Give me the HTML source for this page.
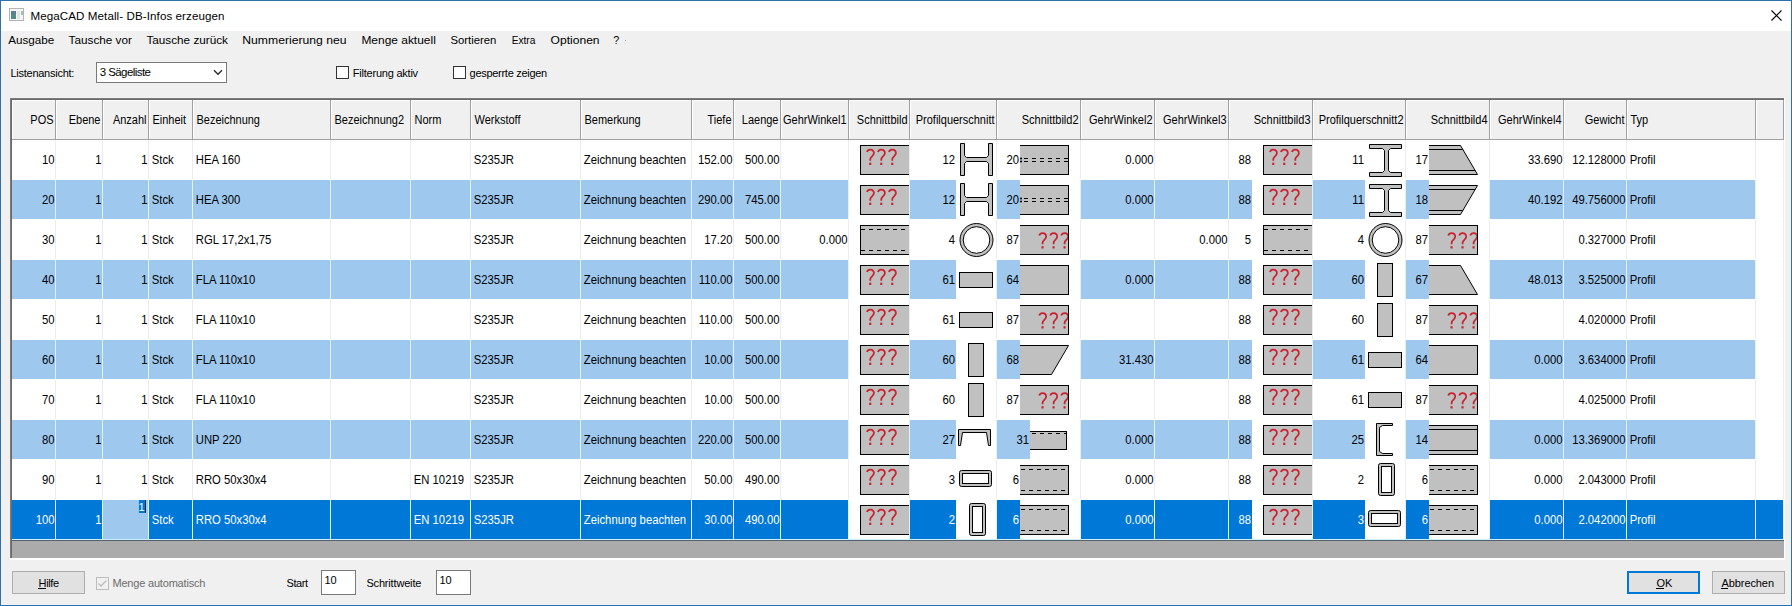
<!DOCTYPE html>
<html><head><meta charset="utf-8"><title>MegaCAD Metall- DB-Infos erzeugen</title>
<style>
html,body{margin:0;padding:0;background:#f0f0f0;overflow:hidden;}
svg{display:block;font-family:"Liberation Sans", sans-serif;}
</style></head><body>
<svg width="1792" height="606" viewBox="0 0 1792 606">
<rect x="0" y="0" width="1792" height="606" fill="#f0f0f0" />
<rect x="1" y="1" width="1790" height="30" fill="#ffffff" />
<rect x="0" y="0" width="1792" height="1" fill="#2f6faa" />
<rect x="0" y="605" width="1792" height="1" fill="#2f6faa" />
<rect x="0" y="0" width="1" height="606" fill="#2f6faa" />
<rect x="1791" y="0" width="1" height="606" fill="#2f6faa" />
<g shape-rendering="crispEdges">
<rect x="9" y="8" width="15" height="13" fill="#b4b4b4" />
<rect x="10" y="9" width="13" height="11" fill="#f6f6f6" />
<rect x="11" y="11" width="5" height="8" fill="#4f8d8a" />
<rect x="11" y="11" width="5" height="3" fill="#5a7f98" />
<rect x="17" y="11" width="3" height="8" fill="#e4e4e4" />
<rect x="21" y="11" width="2" height="4" fill="#a9bab2" />
</g>
<text x="30.5" y="20.3" font-size="11.6" fill="#000" text-anchor="start" textLength="194">MegaCAD Metall- DB-Infos erzeugen</text>
<path d="M1771.5,10.5 L1781.5,20.5 M1781.5,10.5 L1771.5,20.5" stroke="#000" stroke-width="1.1" fill="none"/>
<text x="8.3" y="43.8" font-size="11.6" fill="#000" text-anchor="start" textLength="46" lengthAdjust="spacingAndGlyphs">Ausgabe</text>
<text x="68.6" y="43.8" font-size="11.6" fill="#000" text-anchor="start" textLength="63.3" lengthAdjust="spacingAndGlyphs">Tausche vor</text>
<text x="146.4" y="43.8" font-size="11.6" fill="#000" text-anchor="start" textLength="81.6" lengthAdjust="spacingAndGlyphs">Tausche zurück</text>
<text x="242.3" y="43.8" font-size="11.6" fill="#000" text-anchor="start" textLength="104.3" lengthAdjust="spacingAndGlyphs">Nummerierung neu</text>
<text x="361.4" y="43.8" font-size="11.6" fill="#000" text-anchor="start" textLength="74.4" lengthAdjust="spacingAndGlyphs">Menge aktuell</text>
<text x="450.4" y="43.8" font-size="11.6" fill="#000" text-anchor="start" textLength="46" lengthAdjust="spacingAndGlyphs">Sortieren</text>
<text x="511.7" y="43.8" font-size="11.6" fill="#000" text-anchor="start" textLength="23.7" lengthAdjust="spacingAndGlyphs">Extra</text>
<text x="550.6" y="43.8" font-size="11.6" fill="#000" text-anchor="start" textLength="49" lengthAdjust="spacingAndGlyphs">Optionen</text>
<text x="613.2" y="43.8" font-size="11.6" fill="#000" text-anchor="start" textLength="6" lengthAdjust="spacingAndGlyphs">?</text>
<rect x="625" y="40" width="1" height="1" fill="#a0a0a0" />
<text x="10.4" y="77" font-size="11" fill="#000" text-anchor="start" textLength="64">Listenansicht:</text>
<g shape-rendering="crispEdges">
<rect x="96" y="62" width="131" height="21" fill="#7a7a7a" />
<rect x="97" y="63" width="129" height="19" fill="#ffffff" />
</g>
<text x="99.7" y="76" font-size="11.5" fill="#000" text-anchor="start" textLength="51.3">3 Sägeliste</text>
<path d="M214,70.3 L218,74.3 L222,70.3" stroke="#2b2b2b" stroke-width="1.4" fill="none"/>
<g shape-rendering="crispEdges">
<rect x="336" y="66" width="13" height="13" fill="#333333" />
<rect x="337" y="67" width="11" height="11" fill="#ffffff" />
</g>
<text x="352.8" y="77" font-size="11" fill="#000" text-anchor="start" textLength="65.3">Filterung aktiv</text>
<g shape-rendering="crispEdges">
<rect x="453" y="66" width="13" height="13" fill="#333333" />
<rect x="454" y="67" width="11" height="11" fill="#ffffff" />
</g>
<text x="469.6" y="77" font-size="11" fill="#000" text-anchor="start" textLength="77.6">gesperrte zeigen</text>
<g shape-rendering="crispEdges">
<rect x="10" y="98" width="1775" height="462" fill="#ffffff" />
<rect x="10" y="98" width="1774" height="1" fill="#7c7c7c" />
<rect x="10" y="98" width="1" height="461" fill="#7c7c7c" />
<rect x="11" y="99" width="1773" height="1" fill="#696969" />
<rect x="11" y="99" width="1" height="460" fill="#696969" />
<rect x="12" y="100" width="1772" height="39" fill="#f0f0f0" />
<rect x="12" y="139" width="1772" height="1" fill="#a0a0a0" />
<rect x="12" y="100" width="1772" height="1" fill="#ffffff" />
<rect x="12" y="100" width="1" height="39" fill="#ffffff" />
<rect x="55" y="100" width="1" height="40" fill="#a0a0a0" />
<rect x="56" y="101" width="1" height="38" fill="#ffffff" />
<rect x="102" y="100" width="1" height="40" fill="#a0a0a0" />
<rect x="103" y="101" width="1" height="38" fill="#ffffff" />
<rect x="148" y="100" width="1" height="40" fill="#a0a0a0" />
<rect x="149" y="101" width="1" height="38" fill="#ffffff" />
<rect x="192" y="100" width="1" height="40" fill="#a0a0a0" />
<rect x="193" y="101" width="1" height="38" fill="#ffffff" />
<rect x="330" y="100" width="1" height="40" fill="#a0a0a0" />
<rect x="331" y="101" width="1" height="38" fill="#ffffff" />
<rect x="410" y="100" width="1" height="40" fill="#a0a0a0" />
<rect x="411" y="101" width="1" height="38" fill="#ffffff" />
<rect x="470" y="100" width="1" height="40" fill="#a0a0a0" />
<rect x="471" y="101" width="1" height="38" fill="#ffffff" />
<rect x="580" y="100" width="1" height="40" fill="#a0a0a0" />
<rect x="581" y="101" width="1" height="38" fill="#ffffff" />
<rect x="691" y="100" width="1" height="40" fill="#a0a0a0" />
<rect x="692" y="101" width="1" height="38" fill="#ffffff" />
<rect x="733" y="100" width="1" height="40" fill="#a0a0a0" />
<rect x="734" y="101" width="1" height="38" fill="#ffffff" />
<rect x="780" y="100" width="1" height="40" fill="#a0a0a0" />
<rect x="781" y="101" width="1" height="38" fill="#ffffff" />
<rect x="848" y="100" width="1" height="40" fill="#a0a0a0" />
<rect x="849" y="101" width="1" height="38" fill="#ffffff" />
<rect x="909" y="100" width="1" height="40" fill="#a0a0a0" />
<rect x="910" y="101" width="1" height="38" fill="#ffffff" />
<rect x="996" y="100" width="1" height="40" fill="#a0a0a0" />
<rect x="997" y="101" width="1" height="38" fill="#ffffff" />
<rect x="1080" y="100" width="1" height="40" fill="#a0a0a0" />
<rect x="1081" y="101" width="1" height="38" fill="#ffffff" />
<rect x="1154" y="100" width="1" height="40" fill="#a0a0a0" />
<rect x="1155" y="101" width="1" height="38" fill="#ffffff" />
<rect x="1228" y="100" width="1" height="40" fill="#a0a0a0" />
<rect x="1229" y="101" width="1" height="38" fill="#ffffff" />
<rect x="1312" y="100" width="1" height="40" fill="#a0a0a0" />
<rect x="1313" y="101" width="1" height="38" fill="#ffffff" />
<rect x="1405" y="100" width="1" height="40" fill="#a0a0a0" />
<rect x="1406" y="101" width="1" height="38" fill="#ffffff" />
<rect x="1489" y="100" width="1" height="40" fill="#a0a0a0" />
<rect x="1490" y="101" width="1" height="38" fill="#ffffff" />
<rect x="1563" y="100" width="1" height="40" fill="#a0a0a0" />
<rect x="1564" y="101" width="1" height="38" fill="#ffffff" />
<rect x="1626" y="100" width="1" height="40" fill="#a0a0a0" />
<rect x="1627" y="101" width="1" height="38" fill="#ffffff" />
<rect x="1755" y="100" width="1" height="40" fill="#a0a0a0" />
<rect x="1756" y="101" width="1" height="38" fill="#ffffff" />
<rect x="1783" y="100" width="1" height="40" fill="#a0a0a0" />
</g>
<text x="53.5" y="124" font-size="11" fill="#000" text-anchor="end" transform="matrix(1 0 0 1.12 0 -14.880)" >POS</text>
<text x="100.5" y="124" font-size="11" fill="#000" text-anchor="end" transform="matrix(1 0 0 1.12 0 -14.880)" >Ebene</text>
<text x="146.5" y="124" font-size="11" fill="#000" text-anchor="end" transform="matrix(1 0 0 1.12 0 -14.880)" >Anzahl</text>
<text x="152.5" y="124" font-size="11" fill="#000" text-anchor="start" transform="matrix(1 0 0 1.12 0 -14.880)" >Einheit</text>
<text x="196.5" y="124" font-size="11" fill="#000" text-anchor="start" transform="matrix(1 0 0 1.12 0 -14.880)" >Bezeichnung</text>
<text x="334.5" y="124" font-size="11" fill="#000" text-anchor="start" transform="matrix(1 0 0 1.12 0 -14.880)" >Bezeichnung2</text>
<text x="414.5" y="124" font-size="11" fill="#000" text-anchor="start" transform="matrix(1 0 0 1.12 0 -14.880)" >Norm</text>
<text x="474.5" y="124" font-size="11" fill="#000" text-anchor="start" transform="matrix(1 0 0 1.12 0 -14.880)" >Werkstoff</text>
<text x="584.5" y="124" font-size="11" fill="#000" text-anchor="start" transform="matrix(1 0 0 1.12 0 -14.880)" >Bemerkung</text>
<text x="731.5" y="124" font-size="11" fill="#000" text-anchor="end" transform="matrix(1 0 0 1.12 0 -14.880)" >Tiefe</text>
<text x="778.5" y="124" font-size="11" fill="#000" text-anchor="end" transform="matrix(1 0 0 1.12 0 -14.880)" >Laenge</text>
<text x="846.5" y="124" font-size="11" fill="#000" text-anchor="end" transform="matrix(1 0 0 1.12 0 -14.880)" >GehrWinkel1</text>
<text x="907.5" y="124" font-size="11" fill="#000" text-anchor="end" transform="matrix(1 0 0 1.12 0 -14.880)" >Schnittbild</text>
<text x="994.5" y="124" font-size="11" fill="#000" text-anchor="end" transform="matrix(1 0 0 1.12 0 -14.880)" >Profilquerschnitt</text>
<text x="1078.5" y="124" font-size="11" fill="#000" text-anchor="end" transform="matrix(1 0 0 1.12 0 -14.880)" >Schnittbild2</text>
<text x="1152.5" y="124" font-size="11" fill="#000" text-anchor="end" transform="matrix(1 0 0 1.12 0 -14.880)" >GehrWinkel2</text>
<text x="1226.5" y="124" font-size="11" fill="#000" text-anchor="end" transform="matrix(1 0 0 1.12 0 -14.880)" >GehrWinkel3</text>
<text x="1310.5" y="124" font-size="11" fill="#000" text-anchor="end" transform="matrix(1 0 0 1.12 0 -14.880)" >Schnittbild3</text>
<text x="1403.5" y="124" font-size="11" fill="#000" text-anchor="end" transform="matrix(1 0 0 1.12 0 -14.880)" >Profilquerschnitt2</text>
<text x="1487.5" y="124" font-size="11" fill="#000" text-anchor="end" transform="matrix(1 0 0 1.12 0 -14.880)" >Schnittbild4</text>
<text x="1561.5" y="124" font-size="11" fill="#000" text-anchor="end" transform="matrix(1 0 0 1.12 0 -14.880)" >GehrWinkel4</text>
<text x="1624.5" y="124" font-size="11" fill="#000" text-anchor="end" transform="matrix(1 0 0 1.12 0 -14.880)" >Gewicht</text>
<text x="1630.5" y="124" font-size="11" fill="#000" text-anchor="start" transform="matrix(1 0 0 1.12 0 -14.880)" >Typ</text>
<g shape-rendering="crispEdges">
<rect x="12" y="140" width="1744" height="39" fill="#ffffff" />
</g>
<text x="54.5" y="164" font-size="11.3" fill="#000000" text-anchor="end" transform="matrix(1 0 0 1.1 0 -16.400)" >10</text>
<text x="101.5" y="164" font-size="11.3" fill="#000000" text-anchor="end" transform="matrix(1 0 0 1.1 0 -16.400)" >1</text>
<text x="147.5" y="164" font-size="11.3" fill="#000000" text-anchor="end" transform="matrix(1 0 0 1.1 0 -16.400)" >1</text>
<text x="151.8" y="164" font-size="11.3" fill="#000000" text-anchor="start" transform="matrix(1 0 0 1.1 0 -16.400)" >Stck</text>
<text x="195.8" y="164" font-size="11.3" fill="#000000" text-anchor="start" transform="matrix(1 0 0 1.1 0 -16.400)" >HEA 160</text>
<text x="473.8" y="164" font-size="11.3" fill="#000000" text-anchor="start" transform="matrix(1 0 0 1.1 0 -16.400)" >S235JR</text>
<text x="583.8" y="164" font-size="11.3" fill="#000000" text-anchor="start" transform="matrix(1 0 0 1.1 0 -16.400)" >Zeichnung beachten</text>
<text x="732.5" y="164" font-size="11.3" fill="#000000" text-anchor="end" transform="matrix(1 0 0 1.1 0 -16.400)" >152.00</text>
<text x="779.5" y="164" font-size="11.3" fill="#000000" text-anchor="end" transform="matrix(1 0 0 1.1 0 -16.400)" >500.00</text>
<rect x="849" y="140" width="60" height="39" fill="#fff" shape-rendering="crispEdges"/>
<rect x="956" y="140" width="40" height="39" fill="#fff" shape-rendering="crispEdges"/>
<text x="955" y="164" font-size="11.3" fill="#000000" text-anchor="end" transform="matrix(1 0 0 1.1 0 -16.400)" >12</text>
<rect x="1020" y="140" width="60" height="39" fill="#fff" shape-rendering="crispEdges"/>
<text x="1019" y="164" font-size="11.3" fill="#000000" text-anchor="end" transform="matrix(1 0 0 1.1 0 -16.400)" >20</text>
<text x="1153.5" y="164" font-size="11.3" fill="#000000" text-anchor="end" transform="matrix(1 0 0 1.1 0 -16.400)" >0.000</text>
<rect x="1252" y="140" width="60" height="39" fill="#fff" shape-rendering="crispEdges"/>
<text x="1251" y="164" font-size="11.3" fill="#000000" text-anchor="end" transform="matrix(1 0 0 1.1 0 -16.400)" >88</text>
<rect x="1365" y="140" width="40" height="39" fill="#fff" shape-rendering="crispEdges"/>
<text x="1364" y="164" font-size="11.3" fill="#000000" text-anchor="end" transform="matrix(1 0 0 1.1 0 -16.400)" >11</text>
<rect x="1429" y="140" width="60" height="39" fill="#fff" shape-rendering="crispEdges"/>
<text x="1428" y="164" font-size="11.3" fill="#000000" text-anchor="end" transform="matrix(1 0 0 1.1 0 -16.400)" >17</text>
<text x="1562.5" y="164" font-size="11.3" fill="#000000" text-anchor="end" transform="matrix(1 0 0 1.1 0 -16.400)" >33.690</text>
<text x="1625.5" y="164" font-size="11.3" fill="#000000" text-anchor="end" transform="matrix(1 0 0 1.1 0 -16.400)" >12.128000</text>
<text x="1629.8" y="164" font-size="11.3" fill="#000000" text-anchor="start" transform="matrix(1 0 0 1.1 0 -16.400)" >Profil</text>
<rect x="860" y="145" width="49" height="30" fill="#000" shape-rendering="crispEdges"/>
<rect x="861" y="146" width="48" height="28" fill="#c0c0c0" shape-rendering="crispEdges"/>
<path d="M866.9,152.10000000000002 C867.6,149.9 869.2,149.5 870.2,149.5 C872.6,149.5 873.9,151.20000000000002 873.9,153.20000000000002 C873.9,155.9 870.3,156.60000000000002 870.3,159.10000000000002 V160.70000000000002" stroke="#c8222f" stroke-width="1.75" fill="none"/><rect x="869.2" y="162.70000000000002" width="2.1" height="2.3" fill="#c8222f"/><path d="M877.9,152.10000000000002 C878.6,149.9 880.2,149.5 881.2,149.5 C883.6,149.5 884.9,151.20000000000002 884.9,153.20000000000002 C884.9,155.9 881.3,156.60000000000002 881.3,159.10000000000002 V160.70000000000002" stroke="#c8222f" stroke-width="1.75" fill="none"/><rect x="880.2" y="162.70000000000002" width="2.1" height="2.3" fill="#c8222f"/><path d="M888.9,152.10000000000002 C889.6,149.9 891.2,149.5 892.2,149.5 C894.6,149.5 895.9,151.20000000000002 895.9,153.20000000000002 C895.9,155.9 892.3,156.60000000000002 892.3,159.10000000000002 V160.70000000000002" stroke="#c8222f" stroke-width="1.75" fill="none"/><rect x="891.2" y="162.70000000000002" width="2.1" height="2.3" fill="#c8222f"/>
<path d="M960.5,143.5 H964.5 V155.5 L966.5,157.5 H986.5 L988.5,155.5 V143.5 H992.5 V175.5 H988.5 V163.5 L986.5,161.5 H966.5 L964.5,163.5 V175.5 H960.5 Z" stroke="#000" stroke-width="1"  fill="#c0c0c0"/>
<rect x="1020" y="145" width="49" height="30" fill="#000" shape-rendering="crispEdges"/>
<rect x="1020" y="146" width="48" height="28" fill="#c0c0c0" shape-rendering="crispEdges"/>
<path d="M1024,158.5 H1068" stroke="#000" stroke-width="1"  stroke-width="1.6" stroke-dasharray="4 4" shape-rendering="crispEdges"/>
<rect x="1020" y="157.7" width="2" height="1.6" fill="#000"/>
<path d="M1024,161.5 H1068" stroke="#000" stroke-width="1"  stroke-width="1.6" stroke-dasharray="4 4" shape-rendering="crispEdges"/>
<rect x="1020" y="160.7" width="2" height="1.6" fill="#000"/>
<rect x="1263" y="145" width="49" height="30" fill="#000" shape-rendering="crispEdges"/>
<rect x="1264" y="146" width="48" height="28" fill="#c0c0c0" shape-rendering="crispEdges"/>
<path d="M1269.9,152.10000000000002 C1270.6,149.9 1272.2,149.5 1273.2,149.5 C1275.6,149.5 1276.9,151.20000000000002 1276.9,153.20000000000002 C1276.9,155.9 1273.3,156.60000000000002 1273.3,159.10000000000002 V160.70000000000002" stroke="#c8222f" stroke-width="1.75" fill="none"/><rect x="1272.2" y="162.70000000000002" width="2.1" height="2.3" fill="#c8222f"/><path d="M1280.9,152.10000000000002 C1281.6,149.9 1283.2,149.5 1284.2,149.5 C1286.6,149.5 1287.9,151.20000000000002 1287.9,153.20000000000002 C1287.9,155.9 1284.3,156.60000000000002 1284.3,159.10000000000002 V160.70000000000002" stroke="#c8222f" stroke-width="1.75" fill="none"/><rect x="1283.2" y="162.70000000000002" width="2.1" height="2.3" fill="#c8222f"/><path d="M1291.9,152.10000000000002 C1292.6,149.9 1294.2,149.5 1295.2,149.5 C1297.6,149.5 1298.9,151.20000000000002 1298.9,153.20000000000002 C1298.9,155.9 1295.3,156.60000000000002 1295.3,159.10000000000002 V160.70000000000002" stroke="#c8222f" stroke-width="1.75" fill="none"/><rect x="1294.2" y="162.70000000000002" width="2.1" height="2.3" fill="#c8222f"/>
<path d="M1369.5,144.5 H1401.5 V148.5 H1390.5 L1388.5,150.5 V170.5 L1390.5,172.5 H1401.5 V176.5 H1369.5 V172.5 H1382.5 L1384.5,170.5 V150.5 L1382.5,148.5 H1369.5 Z" stroke="#000" stroke-width="1"  fill="#c0c0c0"/>
<path d="M1429,145.5 H1460.5 L1477.5,174.5 H1429" stroke="#000" stroke-width="1"  fill="#c0c0c0"/>
<path d="M1429,149.5 H1462.8 M1429,170.5 H1475.2" stroke="#000" stroke-width="1"  fill="none"/>
<g shape-rendering="crispEdges">
<rect x="55" y="140" width="1" height="40" fill="#ececec" />
<rect x="102" y="140" width="1" height="40" fill="#ececec" />
<rect x="148" y="140" width="1" height="40" fill="#ececec" />
<rect x="192" y="140" width="1" height="40" fill="#ececec" />
<rect x="330" y="140" width="1" height="40" fill="#ececec" />
<rect x="410" y="140" width="1" height="40" fill="#ececec" />
<rect x="470" y="140" width="1" height="40" fill="#ececec" />
<rect x="580" y="140" width="1" height="40" fill="#ececec" />
<rect x="691" y="140" width="1" height="40" fill="#ececec" />
<rect x="733" y="140" width="1" height="40" fill="#ececec" />
<rect x="780" y="140" width="1" height="40" fill="#ececec" />
<rect x="848" y="140" width="1" height="40" fill="#ececec" />
<rect x="909" y="140" width="1" height="40" fill="#ececec" />
<rect x="996" y="140" width="1" height="40" fill="#ececec" />
<rect x="1080" y="140" width="1" height="40" fill="#ececec" />
<rect x="1154" y="140" width="1" height="40" fill="#ececec" />
<rect x="1228" y="140" width="1" height="40" fill="#ececec" />
<rect x="1312" y="140" width="1" height="40" fill="#ececec" />
<rect x="1405" y="140" width="1" height="40" fill="#ececec" />
<rect x="1489" y="140" width="1" height="40" fill="#ececec" />
<rect x="1563" y="140" width="1" height="40" fill="#ececec" />
<rect x="1626" y="140" width="1" height="40" fill="#ececec" />
<rect x="1755" y="140" width="1" height="40" fill="#ececec" />
<rect x="1783" y="140" width="1" height="40" fill="#ececec" />
<rect x="12" y="179" width="1772" height="1" fill="#ffffff" />
</g>
<g shape-rendering="crispEdges">
<rect x="12" y="180" width="1744" height="39" fill="#9fc8ef" />
</g>
<text x="54.5" y="204" font-size="11.3" fill="#000000" text-anchor="end" transform="matrix(1 0 0 1.1 0 -20.400)" >20</text>
<text x="101.5" y="204" font-size="11.3" fill="#000000" text-anchor="end" transform="matrix(1 0 0 1.1 0 -20.400)" >1</text>
<text x="147.5" y="204" font-size="11.3" fill="#000000" text-anchor="end" transform="matrix(1 0 0 1.1 0 -20.400)" >1</text>
<text x="151.8" y="204" font-size="11.3" fill="#000000" text-anchor="start" transform="matrix(1 0 0 1.1 0 -20.400)" >Stck</text>
<text x="195.8" y="204" font-size="11.3" fill="#000000" text-anchor="start" transform="matrix(1 0 0 1.1 0 -20.400)" >HEA 300</text>
<text x="473.8" y="204" font-size="11.3" fill="#000000" text-anchor="start" transform="matrix(1 0 0 1.1 0 -20.400)" >S235JR</text>
<text x="583.8" y="204" font-size="11.3" fill="#000000" text-anchor="start" transform="matrix(1 0 0 1.1 0 -20.400)" >Zeichnung beachten</text>
<text x="732.5" y="204" font-size="11.3" fill="#000000" text-anchor="end" transform="matrix(1 0 0 1.1 0 -20.400)" >290.00</text>
<text x="779.5" y="204" font-size="11.3" fill="#000000" text-anchor="end" transform="matrix(1 0 0 1.1 0 -20.400)" >745.00</text>
<rect x="849" y="180" width="60" height="39" fill="#fff" shape-rendering="crispEdges"/>
<rect x="956" y="180" width="40" height="39" fill="#fff" shape-rendering="crispEdges"/>
<text x="955" y="204" font-size="11.3" fill="#000000" text-anchor="end" transform="matrix(1 0 0 1.1 0 -20.400)" >12</text>
<rect x="1020" y="180" width="60" height="39" fill="#fff" shape-rendering="crispEdges"/>
<text x="1019" y="204" font-size="11.3" fill="#000000" text-anchor="end" transform="matrix(1 0 0 1.1 0 -20.400)" >20</text>
<text x="1153.5" y="204" font-size="11.3" fill="#000000" text-anchor="end" transform="matrix(1 0 0 1.1 0 -20.400)" >0.000</text>
<rect x="1252" y="180" width="60" height="39" fill="#fff" shape-rendering="crispEdges"/>
<text x="1251" y="204" font-size="11.3" fill="#000000" text-anchor="end" transform="matrix(1 0 0 1.1 0 -20.400)" >88</text>
<rect x="1365" y="180" width="40" height="39" fill="#fff" shape-rendering="crispEdges"/>
<text x="1364" y="204" font-size="11.3" fill="#000000" text-anchor="end" transform="matrix(1 0 0 1.1 0 -20.400)" >11</text>
<rect x="1429" y="180" width="60" height="39" fill="#fff" shape-rendering="crispEdges"/>
<text x="1428" y="204" font-size="11.3" fill="#000000" text-anchor="end" transform="matrix(1 0 0 1.1 0 -20.400)" >18</text>
<text x="1562.5" y="204" font-size="11.3" fill="#000000" text-anchor="end" transform="matrix(1 0 0 1.1 0 -20.400)" >40.192</text>
<text x="1625.5" y="204" font-size="11.3" fill="#000000" text-anchor="end" transform="matrix(1 0 0 1.1 0 -20.400)" >49.756000</text>
<text x="1629.8" y="204" font-size="11.3" fill="#000000" text-anchor="start" transform="matrix(1 0 0 1.1 0 -20.400)" >Profil</text>
<rect x="860" y="185" width="49" height="30" fill="#000" shape-rendering="crispEdges"/>
<rect x="861" y="186" width="48" height="28" fill="#c0c0c0" shape-rendering="crispEdges"/>
<path d="M866.9,192.10000000000002 C867.6,189.9 869.2,189.5 870.2,189.5 C872.6,189.5 873.9,191.20000000000002 873.9,193.20000000000002 C873.9,195.9 870.3,196.60000000000002 870.3,199.10000000000002 V200.70000000000002" stroke="#c8222f" stroke-width="1.75" fill="none"/><rect x="869.2" y="202.70000000000002" width="2.1" height="2.3" fill="#c8222f"/><path d="M877.9,192.10000000000002 C878.6,189.9 880.2,189.5 881.2,189.5 C883.6,189.5 884.9,191.20000000000002 884.9,193.20000000000002 C884.9,195.9 881.3,196.60000000000002 881.3,199.10000000000002 V200.70000000000002" stroke="#c8222f" stroke-width="1.75" fill="none"/><rect x="880.2" y="202.70000000000002" width="2.1" height="2.3" fill="#c8222f"/><path d="M888.9,192.10000000000002 C889.6,189.9 891.2,189.5 892.2,189.5 C894.6,189.5 895.9,191.20000000000002 895.9,193.20000000000002 C895.9,195.9 892.3,196.60000000000002 892.3,199.10000000000002 V200.70000000000002" stroke="#c8222f" stroke-width="1.75" fill="none"/><rect x="891.2" y="202.70000000000002" width="2.1" height="2.3" fill="#c8222f"/>
<path d="M960.5,183.5 H964.5 V195.5 L966.5,197.5 H986.5 L988.5,195.5 V183.5 H992.5 V215.5 H988.5 V203.5 L986.5,201.5 H966.5 L964.5,203.5 V215.5 H960.5 Z" stroke="#000" stroke-width="1"  fill="#c0c0c0"/>
<rect x="1020" y="185" width="49" height="30" fill="#000" shape-rendering="crispEdges"/>
<rect x="1020" y="186" width="48" height="28" fill="#c0c0c0" shape-rendering="crispEdges"/>
<path d="M1024,198.5 H1068" stroke="#000" stroke-width="1"  stroke-width="1.6" stroke-dasharray="4 4" shape-rendering="crispEdges"/>
<rect x="1020" y="197.7" width="2" height="1.6" fill="#000"/>
<path d="M1024,201.5 H1068" stroke="#000" stroke-width="1"  stroke-width="1.6" stroke-dasharray="4 4" shape-rendering="crispEdges"/>
<rect x="1020" y="200.7" width="2" height="1.6" fill="#000"/>
<rect x="1263" y="185" width="49" height="30" fill="#000" shape-rendering="crispEdges"/>
<rect x="1264" y="186" width="48" height="28" fill="#c0c0c0" shape-rendering="crispEdges"/>
<path d="M1269.9,192.10000000000002 C1270.6,189.9 1272.2,189.5 1273.2,189.5 C1275.6,189.5 1276.9,191.20000000000002 1276.9,193.20000000000002 C1276.9,195.9 1273.3,196.60000000000002 1273.3,199.10000000000002 V200.70000000000002" stroke="#c8222f" stroke-width="1.75" fill="none"/><rect x="1272.2" y="202.70000000000002" width="2.1" height="2.3" fill="#c8222f"/><path d="M1280.9,192.10000000000002 C1281.6,189.9 1283.2,189.5 1284.2,189.5 C1286.6,189.5 1287.9,191.20000000000002 1287.9,193.20000000000002 C1287.9,195.9 1284.3,196.60000000000002 1284.3,199.10000000000002 V200.70000000000002" stroke="#c8222f" stroke-width="1.75" fill="none"/><rect x="1283.2" y="202.70000000000002" width="2.1" height="2.3" fill="#c8222f"/><path d="M1291.9,192.10000000000002 C1292.6,189.9 1294.2,189.5 1295.2,189.5 C1297.6,189.5 1298.9,191.20000000000002 1298.9,193.20000000000002 C1298.9,195.9 1295.3,196.60000000000002 1295.3,199.10000000000002 V200.70000000000002" stroke="#c8222f" stroke-width="1.75" fill="none"/><rect x="1294.2" y="202.70000000000002" width="2.1" height="2.3" fill="#c8222f"/>
<path d="M1369.5,184.5 H1401.5 V188.5 H1390.5 L1388.5,190.5 V210.5 L1390.5,212.5 H1401.5 V216.5 H1369.5 V212.5 H1382.5 L1384.5,210.5 V190.5 L1382.5,188.5 H1369.5 Z" stroke="#000" stroke-width="1"  fill="#c0c0c0"/>
<path d="M1429,185.5 H1477.5 L1460.5,214.5 H1429" stroke="#000" stroke-width="1"  fill="#c0c0c0"/>
<path d="M1429,189.5 H1475.2 M1429,210.5 H1462.8" stroke="#000" stroke-width="1"  fill="none"/>
<g shape-rendering="crispEdges">
<rect x="55" y="180" width="1" height="40" fill="#dff1fb" />
<rect x="102" y="180" width="1" height="40" fill="#dff1fb" />
<rect x="148" y="180" width="1" height="40" fill="#dff1fb" />
<rect x="192" y="180" width="1" height="40" fill="#dff1fb" />
<rect x="330" y="180" width="1" height="40" fill="#dff1fb" />
<rect x="410" y="180" width="1" height="40" fill="#dff1fb" />
<rect x="470" y="180" width="1" height="40" fill="#dff1fb" />
<rect x="580" y="180" width="1" height="40" fill="#dff1fb" />
<rect x="691" y="180" width="1" height="40" fill="#dff1fb" />
<rect x="733" y="180" width="1" height="40" fill="#dff1fb" />
<rect x="780" y="180" width="1" height="40" fill="#dff1fb" />
<rect x="848" y="180" width="1" height="40" fill="#dff1fb" />
<rect x="909" y="180" width="1" height="40" fill="#dff1fb" />
<rect x="996" y="180" width="1" height="40" fill="#dff1fb" />
<rect x="1080" y="180" width="1" height="40" fill="#dff1fb" />
<rect x="1154" y="180" width="1" height="40" fill="#dff1fb" />
<rect x="1228" y="180" width="1" height="40" fill="#dff1fb" />
<rect x="1312" y="180" width="1" height="40" fill="#dff1fb" />
<rect x="1405" y="180" width="1" height="40" fill="#dff1fb" />
<rect x="1489" y="180" width="1" height="40" fill="#dff1fb" />
<rect x="1563" y="180" width="1" height="40" fill="#dff1fb" />
<rect x="1626" y="180" width="1" height="40" fill="#dff1fb" />
<rect x="1755" y="180" width="1" height="40" fill="#dff1fb" />
<rect x="1783" y="180" width="1" height="40" fill="#ececec" />
<rect x="12" y="219" width="1772" height="1" fill="#ffffff" />
</g>
<g shape-rendering="crispEdges">
<rect x="12" y="220" width="1744" height="39" fill="#ffffff" />
</g>
<text x="54.5" y="244" font-size="11.3" fill="#000000" text-anchor="end" transform="matrix(1 0 0 1.1 0 -24.400)" >30</text>
<text x="101.5" y="244" font-size="11.3" fill="#000000" text-anchor="end" transform="matrix(1 0 0 1.1 0 -24.400)" >1</text>
<text x="147.5" y="244" font-size="11.3" fill="#000000" text-anchor="end" transform="matrix(1 0 0 1.1 0 -24.400)" >1</text>
<text x="151.8" y="244" font-size="11.3" fill="#000000" text-anchor="start" transform="matrix(1 0 0 1.1 0 -24.400)" >Stck</text>
<text x="195.8" y="244" font-size="11.3" fill="#000000" text-anchor="start" transform="matrix(1 0 0 1.1 0 -24.400)" >RGL 17,2x1,75</text>
<text x="473.8" y="244" font-size="11.3" fill="#000000" text-anchor="start" transform="matrix(1 0 0 1.1 0 -24.400)" >S235JR</text>
<text x="583.8" y="244" font-size="11.3" fill="#000000" text-anchor="start" transform="matrix(1 0 0 1.1 0 -24.400)" >Zeichnung beachten</text>
<text x="732.5" y="244" font-size="11.3" fill="#000000" text-anchor="end" transform="matrix(1 0 0 1.1 0 -24.400)" >17.20</text>
<text x="779.5" y="244" font-size="11.3" fill="#000000" text-anchor="end" transform="matrix(1 0 0 1.1 0 -24.400)" >500.00</text>
<text x="847.5" y="244" font-size="11.3" fill="#000000" text-anchor="end" transform="matrix(1 0 0 1.1 0 -24.400)" >0.000</text>
<rect x="849" y="220" width="60" height="39" fill="#fff" shape-rendering="crispEdges"/>
<rect x="956" y="220" width="40" height="39" fill="#fff" shape-rendering="crispEdges"/>
<text x="955" y="244" font-size="11.3" fill="#000000" text-anchor="end" transform="matrix(1 0 0 1.1 0 -24.400)" >4</text>
<rect x="1020" y="220" width="60" height="39" fill="#fff" shape-rendering="crispEdges"/>
<text x="1019" y="244" font-size="11.3" fill="#000000" text-anchor="end" transform="matrix(1 0 0 1.1 0 -24.400)" >87</text>
<text x="1227.5" y="244" font-size="11.3" fill="#000000" text-anchor="end" transform="matrix(1 0 0 1.1 0 -24.400)" >0.000</text>
<rect x="1252" y="220" width="60" height="39" fill="#fff" shape-rendering="crispEdges"/>
<text x="1251" y="244" font-size="11.3" fill="#000000" text-anchor="end" transform="matrix(1 0 0 1.1 0 -24.400)" >5</text>
<rect x="1365" y="220" width="40" height="39" fill="#fff" shape-rendering="crispEdges"/>
<text x="1364" y="244" font-size="11.3" fill="#000000" text-anchor="end" transform="matrix(1 0 0 1.1 0 -24.400)" >4</text>
<rect x="1429" y="220" width="60" height="39" fill="#fff" shape-rendering="crispEdges"/>
<text x="1428" y="244" font-size="11.3" fill="#000000" text-anchor="end" transform="matrix(1 0 0 1.1 0 -24.400)" >87</text>
<text x="1625.5" y="244" font-size="11.3" fill="#000000" text-anchor="end" transform="matrix(1 0 0 1.1 0 -24.400)" >0.327000</text>
<text x="1629.8" y="244" font-size="11.3" fill="#000000" text-anchor="start" transform="matrix(1 0 0 1.1 0 -24.400)" >Profil</text>
<rect x="860" y="225" width="49" height="30" fill="#000" shape-rendering="crispEdges"/>
<rect x="861" y="226" width="48" height="28" fill="#c0c0c0" shape-rendering="crispEdges"/>
<path d="M861,229.5 H909" stroke="#000" stroke-width="1"  stroke-dasharray="4 4" stroke-dashoffset="0" shape-rendering="crispEdges"/>
<path d="M861,250.5 H909" stroke="#000" stroke-width="1"  stroke-dasharray="4 4" stroke-dashoffset="0" shape-rendering="crispEdges"/>
<circle cx="976.5" cy="240" r="16.5" stroke="#000" stroke-width="1"  fill="#c0c0c0"/>
<circle cx="976.5" cy="240" r="13.3" stroke="#000" stroke-width="1"  fill="#fff"/>
<rect x="1020" y="225" width="49" height="30" fill="#000" shape-rendering="crispEdges"/>
<rect x="1020" y="226" width="48" height="28" fill="#c0c0c0" shape-rendering="crispEdges"/>
<path d="M1039.2,235.60000000000002 C1039.8999999999999,233.4 1041.5,233.0 1042.5,233.0 C1044.8999999999999,233.0 1046.2,234.70000000000002 1046.2,236.70000000000002 C1046.2,239.4 1042.6,240.10000000000002 1042.6,242.60000000000002 V244.20000000000002" stroke="#c8222f" stroke-width="1.75" fill="none"/><rect x="1041.5" y="246.20000000000002" width="2.1" height="2.3" fill="#c8222f"/><path d="M1050.2,235.60000000000002 C1050.8999999999999,233.4 1052.5,233.0 1053.5,233.0 C1055.8999999999999,233.0 1057.2,234.70000000000002 1057.2,236.70000000000002 C1057.2,239.4 1053.6,240.10000000000002 1053.6,242.60000000000002 V244.20000000000002" stroke="#c8222f" stroke-width="1.75" fill="none"/><rect x="1052.5" y="246.20000000000002" width="2.1" height="2.3" fill="#c8222f"/><path d="M1061.2,235.60000000000002 C1061.8999999999999,233.4 1063.5,233.0 1064.5,233.0 C1066.8999999999999,233.0 1068.2,234.70000000000002 1068.2,236.70000000000002 C1068.2,239.4 1064.6,240.10000000000002 1064.6,242.60000000000002 V244.20000000000002" stroke="#c8222f" stroke-width="1.75" fill="none"/><rect x="1063.5" y="246.20000000000002" width="2.1" height="2.3" fill="#c8222f"/>
<rect x="1068" y="225" width="1" height="30" fill="#000" shape-rendering="crispEdges"/>
<rect x="1263" y="225" width="49" height="30" fill="#000" shape-rendering="crispEdges"/>
<rect x="1264" y="226" width="48" height="28" fill="#c0c0c0" shape-rendering="crispEdges"/>
<path d="M1264,229.5 H1312" stroke="#000" stroke-width="1"  stroke-dasharray="4 4" stroke-dashoffset="0" shape-rendering="crispEdges"/>
<path d="M1264,250.5 H1312" stroke="#000" stroke-width="1"  stroke-dasharray="4 4" stroke-dashoffset="0" shape-rendering="crispEdges"/>
<circle cx="1385.5" cy="240" r="16.5" stroke="#000" stroke-width="1"  fill="#c0c0c0"/>
<circle cx="1385.5" cy="240" r="13.3" stroke="#000" stroke-width="1"  fill="#fff"/>
<rect x="1429" y="225" width="49" height="30" fill="#000" shape-rendering="crispEdges"/>
<rect x="1429" y="226" width="48" height="28" fill="#c0c0c0" shape-rendering="crispEdges"/>
<path d="M1448.2,235.60000000000002 C1448.8999999999999,233.4 1450.5,233.0 1451.5,233.0 C1453.8999999999999,233.0 1455.2,234.70000000000002 1455.2,236.70000000000002 C1455.2,239.4 1451.6,240.10000000000002 1451.6,242.60000000000002 V244.20000000000002" stroke="#c8222f" stroke-width="1.75" fill="none"/><rect x="1450.5" y="246.20000000000002" width="2.1" height="2.3" fill="#c8222f"/><path d="M1459.2,235.60000000000002 C1459.8999999999999,233.4 1461.5,233.0 1462.5,233.0 C1464.8999999999999,233.0 1466.2,234.70000000000002 1466.2,236.70000000000002 C1466.2,239.4 1462.6,240.10000000000002 1462.6,242.60000000000002 V244.20000000000002" stroke="#c8222f" stroke-width="1.75" fill="none"/><rect x="1461.5" y="246.20000000000002" width="2.1" height="2.3" fill="#c8222f"/><path d="M1470.2,235.60000000000002 C1470.8999999999999,233.4 1472.5,233.0 1473.5,233.0 C1475.8999999999999,233.0 1477.2,234.70000000000002 1477.2,236.70000000000002 C1477.2,239.4 1473.6,240.10000000000002 1473.6,242.60000000000002 V244.20000000000002" stroke="#c8222f" stroke-width="1.75" fill="none"/><rect x="1472.5" y="246.20000000000002" width="2.1" height="2.3" fill="#c8222f"/>
<rect x="1477" y="225" width="1" height="30" fill="#000" shape-rendering="crispEdges"/>
<g shape-rendering="crispEdges">
<rect x="55" y="220" width="1" height="40" fill="#ececec" />
<rect x="102" y="220" width="1" height="40" fill="#ececec" />
<rect x="148" y="220" width="1" height="40" fill="#ececec" />
<rect x="192" y="220" width="1" height="40" fill="#ececec" />
<rect x="330" y="220" width="1" height="40" fill="#ececec" />
<rect x="410" y="220" width="1" height="40" fill="#ececec" />
<rect x="470" y="220" width="1" height="40" fill="#ececec" />
<rect x="580" y="220" width="1" height="40" fill="#ececec" />
<rect x="691" y="220" width="1" height="40" fill="#ececec" />
<rect x="733" y="220" width="1" height="40" fill="#ececec" />
<rect x="780" y="220" width="1" height="40" fill="#ececec" />
<rect x="848" y="220" width="1" height="40" fill="#ececec" />
<rect x="909" y="220" width="1" height="40" fill="#ececec" />
<rect x="996" y="220" width="1" height="40" fill="#ececec" />
<rect x="1080" y="220" width="1" height="40" fill="#ececec" />
<rect x="1154" y="220" width="1" height="40" fill="#ececec" />
<rect x="1228" y="220" width="1" height="40" fill="#ececec" />
<rect x="1312" y="220" width="1" height="40" fill="#ececec" />
<rect x="1405" y="220" width="1" height="40" fill="#ececec" />
<rect x="1489" y="220" width="1" height="40" fill="#ececec" />
<rect x="1563" y="220" width="1" height="40" fill="#ececec" />
<rect x="1626" y="220" width="1" height="40" fill="#ececec" />
<rect x="1755" y="220" width="1" height="40" fill="#ececec" />
<rect x="1783" y="220" width="1" height="40" fill="#ececec" />
<rect x="12" y="259" width="1772" height="1" fill="#ffffff" />
</g>
<g shape-rendering="crispEdges">
<rect x="12" y="260" width="1744" height="39" fill="#9fc8ef" />
</g>
<text x="54.5" y="284" font-size="11.3" fill="#000000" text-anchor="end" transform="matrix(1 0 0 1.1 0 -28.400)" >40</text>
<text x="101.5" y="284" font-size="11.3" fill="#000000" text-anchor="end" transform="matrix(1 0 0 1.1 0 -28.400)" >1</text>
<text x="147.5" y="284" font-size="11.3" fill="#000000" text-anchor="end" transform="matrix(1 0 0 1.1 0 -28.400)" >1</text>
<text x="151.8" y="284" font-size="11.3" fill="#000000" text-anchor="start" transform="matrix(1 0 0 1.1 0 -28.400)" >Stck</text>
<text x="195.8" y="284" font-size="11.3" fill="#000000" text-anchor="start" transform="matrix(1 0 0 1.1 0 -28.400)" >FLA 110x10</text>
<text x="473.8" y="284" font-size="11.3" fill="#000000" text-anchor="start" transform="matrix(1 0 0 1.1 0 -28.400)" >S235JR</text>
<text x="583.8" y="284" font-size="11.3" fill="#000000" text-anchor="start" transform="matrix(1 0 0 1.1 0 -28.400)" >Zeichnung beachten</text>
<text x="732.5" y="284" font-size="11.3" fill="#000000" text-anchor="end" transform="matrix(1 0 0 1.1 0 -28.400)" >110.00</text>
<text x="779.5" y="284" font-size="11.3" fill="#000000" text-anchor="end" transform="matrix(1 0 0 1.1 0 -28.400)" >500.00</text>
<rect x="849" y="260" width="60" height="39" fill="#fff" shape-rendering="crispEdges"/>
<rect x="956" y="260" width="40" height="39" fill="#fff" shape-rendering="crispEdges"/>
<text x="955" y="284" font-size="11.3" fill="#000000" text-anchor="end" transform="matrix(1 0 0 1.1 0 -28.400)" >61</text>
<rect x="1020" y="260" width="60" height="39" fill="#fff" shape-rendering="crispEdges"/>
<text x="1019" y="284" font-size="11.3" fill="#000000" text-anchor="end" transform="matrix(1 0 0 1.1 0 -28.400)" >64</text>
<text x="1153.5" y="284" font-size="11.3" fill="#000000" text-anchor="end" transform="matrix(1 0 0 1.1 0 -28.400)" >0.000</text>
<rect x="1252" y="260" width="60" height="39" fill="#fff" shape-rendering="crispEdges"/>
<text x="1251" y="284" font-size="11.3" fill="#000000" text-anchor="end" transform="matrix(1 0 0 1.1 0 -28.400)" >88</text>
<rect x="1365" y="260" width="40" height="39" fill="#fff" shape-rendering="crispEdges"/>
<text x="1364" y="284" font-size="11.3" fill="#000000" text-anchor="end" transform="matrix(1 0 0 1.1 0 -28.400)" >60</text>
<rect x="1429" y="260" width="60" height="39" fill="#fff" shape-rendering="crispEdges"/>
<text x="1428" y="284" font-size="11.3" fill="#000000" text-anchor="end" transform="matrix(1 0 0 1.1 0 -28.400)" >67</text>
<text x="1562.5" y="284" font-size="11.3" fill="#000000" text-anchor="end" transform="matrix(1 0 0 1.1 0 -28.400)" >48.013</text>
<text x="1625.5" y="284" font-size="11.3" fill="#000000" text-anchor="end" transform="matrix(1 0 0 1.1 0 -28.400)" >3.525000</text>
<text x="1629.8" y="284" font-size="11.3" fill="#000000" text-anchor="start" transform="matrix(1 0 0 1.1 0 -28.400)" >Profil</text>
<rect x="860" y="265" width="49" height="30" fill="#000" shape-rendering="crispEdges"/>
<rect x="861" y="266" width="48" height="28" fill="#c0c0c0" shape-rendering="crispEdges"/>
<path d="M866.9,272.1 C867.6,269.90000000000003 869.2,269.5 870.2,269.5 C872.6,269.5 873.9,271.2 873.9,273.2 C873.9,275.90000000000003 870.3,276.6 870.3,279.1 V280.7" stroke="#c8222f" stroke-width="1.75" fill="none"/><rect x="869.2" y="282.7" width="2.1" height="2.3" fill="#c8222f"/><path d="M877.9,272.1 C878.6,269.90000000000003 880.2,269.5 881.2,269.5 C883.6,269.5 884.9,271.2 884.9,273.2 C884.9,275.90000000000003 881.3,276.6 881.3,279.1 V280.7" stroke="#c8222f" stroke-width="1.75" fill="none"/><rect x="880.2" y="282.7" width="2.1" height="2.3" fill="#c8222f"/><path d="M888.9,272.1 C889.6,269.90000000000003 891.2,269.5 892.2,269.5 C894.6,269.5 895.9,271.2 895.9,273.2 C895.9,275.90000000000003 892.3,276.6 892.3,279.1 V280.7" stroke="#c8222f" stroke-width="1.75" fill="none"/><rect x="891.2" y="282.7" width="2.1" height="2.3" fill="#c8222f"/>
<rect x="959.5" y="272.5" width="33" height="15" stroke="#000" stroke-width="1"  fill="#c0c0c0"/>
<rect x="1020" y="265" width="49" height="30" fill="#000" shape-rendering="crispEdges"/>
<rect x="1020" y="266" width="48" height="28" fill="#c0c0c0" shape-rendering="crispEdges"/>
<rect x="1263" y="265" width="49" height="30" fill="#000" shape-rendering="crispEdges"/>
<rect x="1264" y="266" width="48" height="28" fill="#c0c0c0" shape-rendering="crispEdges"/>
<path d="M1269.9,272.1 C1270.6,269.90000000000003 1272.2,269.5 1273.2,269.5 C1275.6,269.5 1276.9,271.2 1276.9,273.2 C1276.9,275.90000000000003 1273.3,276.6 1273.3,279.1 V280.7" stroke="#c8222f" stroke-width="1.75" fill="none"/><rect x="1272.2" y="282.7" width="2.1" height="2.3" fill="#c8222f"/><path d="M1280.9,272.1 C1281.6,269.90000000000003 1283.2,269.5 1284.2,269.5 C1286.6,269.5 1287.9,271.2 1287.9,273.2 C1287.9,275.90000000000003 1284.3,276.6 1284.3,279.1 V280.7" stroke="#c8222f" stroke-width="1.75" fill="none"/><rect x="1283.2" y="282.7" width="2.1" height="2.3" fill="#c8222f"/><path d="M1291.9,272.1 C1292.6,269.90000000000003 1294.2,269.5 1295.2,269.5 C1297.6,269.5 1298.9,271.2 1298.9,273.2 C1298.9,275.90000000000003 1295.3,276.6 1295.3,279.1 V280.7" stroke="#c8222f" stroke-width="1.75" fill="none"/><rect x="1294.2" y="282.7" width="2.1" height="2.3" fill="#c8222f"/>
<rect x="1377.5" y="263.5" width="15" height="33" stroke="#000" stroke-width="1"  fill="#c0c0c0"/>
<path d="M1429,265.5 H1460.5 L1477.5,294.5 H1429" stroke="#000" stroke-width="1"  fill="#c0c0c0"/>
<g shape-rendering="crispEdges">
<rect x="55" y="260" width="1" height="40" fill="#dff1fb" />
<rect x="102" y="260" width="1" height="40" fill="#dff1fb" />
<rect x="148" y="260" width="1" height="40" fill="#dff1fb" />
<rect x="192" y="260" width="1" height="40" fill="#dff1fb" />
<rect x="330" y="260" width="1" height="40" fill="#dff1fb" />
<rect x="410" y="260" width="1" height="40" fill="#dff1fb" />
<rect x="470" y="260" width="1" height="40" fill="#dff1fb" />
<rect x="580" y="260" width="1" height="40" fill="#dff1fb" />
<rect x="691" y="260" width="1" height="40" fill="#dff1fb" />
<rect x="733" y="260" width="1" height="40" fill="#dff1fb" />
<rect x="780" y="260" width="1" height="40" fill="#dff1fb" />
<rect x="848" y="260" width="1" height="40" fill="#dff1fb" />
<rect x="909" y="260" width="1" height="40" fill="#dff1fb" />
<rect x="996" y="260" width="1" height="40" fill="#dff1fb" />
<rect x="1080" y="260" width="1" height="40" fill="#dff1fb" />
<rect x="1154" y="260" width="1" height="40" fill="#dff1fb" />
<rect x="1228" y="260" width="1" height="40" fill="#dff1fb" />
<rect x="1312" y="260" width="1" height="40" fill="#dff1fb" />
<rect x="1405" y="260" width="1" height="40" fill="#dff1fb" />
<rect x="1489" y="260" width="1" height="40" fill="#dff1fb" />
<rect x="1563" y="260" width="1" height="40" fill="#dff1fb" />
<rect x="1626" y="260" width="1" height="40" fill="#dff1fb" />
<rect x="1755" y="260" width="1" height="40" fill="#dff1fb" />
<rect x="1783" y="260" width="1" height="40" fill="#ececec" />
<rect x="12" y="299" width="1772" height="1" fill="#ffffff" />
</g>
<g shape-rendering="crispEdges">
<rect x="12" y="300" width="1744" height="39" fill="#ffffff" />
</g>
<text x="54.5" y="324" font-size="11.3" fill="#000000" text-anchor="end" transform="matrix(1 0 0 1.1 0 -32.400)" >50</text>
<text x="101.5" y="324" font-size="11.3" fill="#000000" text-anchor="end" transform="matrix(1 0 0 1.1 0 -32.400)" >1</text>
<text x="147.5" y="324" font-size="11.3" fill="#000000" text-anchor="end" transform="matrix(1 0 0 1.1 0 -32.400)" >1</text>
<text x="151.8" y="324" font-size="11.3" fill="#000000" text-anchor="start" transform="matrix(1 0 0 1.1 0 -32.400)" >Stck</text>
<text x="195.8" y="324" font-size="11.3" fill="#000000" text-anchor="start" transform="matrix(1 0 0 1.1 0 -32.400)" >FLA 110x10</text>
<text x="473.8" y="324" font-size="11.3" fill="#000000" text-anchor="start" transform="matrix(1 0 0 1.1 0 -32.400)" >S235JR</text>
<text x="583.8" y="324" font-size="11.3" fill="#000000" text-anchor="start" transform="matrix(1 0 0 1.1 0 -32.400)" >Zeichnung beachten</text>
<text x="732.5" y="324" font-size="11.3" fill="#000000" text-anchor="end" transform="matrix(1 0 0 1.1 0 -32.400)" >110.00</text>
<text x="779.5" y="324" font-size="11.3" fill="#000000" text-anchor="end" transform="matrix(1 0 0 1.1 0 -32.400)" >500.00</text>
<rect x="849" y="300" width="60" height="39" fill="#fff" shape-rendering="crispEdges"/>
<rect x="956" y="300" width="40" height="39" fill="#fff" shape-rendering="crispEdges"/>
<text x="955" y="324" font-size="11.3" fill="#000000" text-anchor="end" transform="matrix(1 0 0 1.1 0 -32.400)" >61</text>
<rect x="1020" y="300" width="60" height="39" fill="#fff" shape-rendering="crispEdges"/>
<text x="1019" y="324" font-size="11.3" fill="#000000" text-anchor="end" transform="matrix(1 0 0 1.1 0 -32.400)" >87</text>
<rect x="1252" y="300" width="60" height="39" fill="#fff" shape-rendering="crispEdges"/>
<text x="1251" y="324" font-size="11.3" fill="#000000" text-anchor="end" transform="matrix(1 0 0 1.1 0 -32.400)" >88</text>
<rect x="1365" y="300" width="40" height="39" fill="#fff" shape-rendering="crispEdges"/>
<text x="1364" y="324" font-size="11.3" fill="#000000" text-anchor="end" transform="matrix(1 0 0 1.1 0 -32.400)" >60</text>
<rect x="1429" y="300" width="60" height="39" fill="#fff" shape-rendering="crispEdges"/>
<text x="1428" y="324" font-size="11.3" fill="#000000" text-anchor="end" transform="matrix(1 0 0 1.1 0 -32.400)" >87</text>
<text x="1625.5" y="324" font-size="11.3" fill="#000000" text-anchor="end" transform="matrix(1 0 0 1.1 0 -32.400)" >4.020000</text>
<text x="1629.8" y="324" font-size="11.3" fill="#000000" text-anchor="start" transform="matrix(1 0 0 1.1 0 -32.400)" >Profil</text>
<rect x="860" y="305" width="49" height="30" fill="#000" shape-rendering="crispEdges"/>
<rect x="861" y="306" width="48" height="28" fill="#c0c0c0" shape-rendering="crispEdges"/>
<path d="M866.9,312.1 C867.6,309.90000000000003 869.2,309.5 870.2,309.5 C872.6,309.5 873.9,311.2 873.9,313.2 C873.9,315.90000000000003 870.3,316.6 870.3,319.1 V320.7" stroke="#c8222f" stroke-width="1.75" fill="none"/><rect x="869.2" y="322.7" width="2.1" height="2.3" fill="#c8222f"/><path d="M877.9,312.1 C878.6,309.90000000000003 880.2,309.5 881.2,309.5 C883.6,309.5 884.9,311.2 884.9,313.2 C884.9,315.90000000000003 881.3,316.6 881.3,319.1 V320.7" stroke="#c8222f" stroke-width="1.75" fill="none"/><rect x="880.2" y="322.7" width="2.1" height="2.3" fill="#c8222f"/><path d="M888.9,312.1 C889.6,309.90000000000003 891.2,309.5 892.2,309.5 C894.6,309.5 895.9,311.2 895.9,313.2 C895.9,315.90000000000003 892.3,316.6 892.3,319.1 V320.7" stroke="#c8222f" stroke-width="1.75" fill="none"/><rect x="891.2" y="322.7" width="2.1" height="2.3" fill="#c8222f"/>
<rect x="959.5" y="312.5" width="33" height="15" stroke="#000" stroke-width="1"  fill="#c0c0c0"/>
<rect x="1020" y="305" width="49" height="30" fill="#000" shape-rendering="crispEdges"/>
<rect x="1020" y="306" width="48" height="28" fill="#c0c0c0" shape-rendering="crispEdges"/>
<path d="M1039.2,315.6 C1039.8999999999999,313.40000000000003 1041.5,313.0 1042.5,313.0 C1044.8999999999999,313.0 1046.2,314.7 1046.2,316.7 C1046.2,319.40000000000003 1042.6,320.1 1042.6,322.6 V324.2" stroke="#c8222f" stroke-width="1.75" fill="none"/><rect x="1041.5" y="326.2" width="2.1" height="2.3" fill="#c8222f"/><path d="M1050.2,315.6 C1050.8999999999999,313.40000000000003 1052.5,313.0 1053.5,313.0 C1055.8999999999999,313.0 1057.2,314.7 1057.2,316.7 C1057.2,319.40000000000003 1053.6,320.1 1053.6,322.6 V324.2" stroke="#c8222f" stroke-width="1.75" fill="none"/><rect x="1052.5" y="326.2" width="2.1" height="2.3" fill="#c8222f"/><path d="M1061.2,315.6 C1061.8999999999999,313.40000000000003 1063.5,313.0 1064.5,313.0 C1066.8999999999999,313.0 1068.2,314.7 1068.2,316.7 C1068.2,319.40000000000003 1064.6,320.1 1064.6,322.6 V324.2" stroke="#c8222f" stroke-width="1.75" fill="none"/><rect x="1063.5" y="326.2" width="2.1" height="2.3" fill="#c8222f"/>
<rect x="1068" y="305" width="1" height="30" fill="#000" shape-rendering="crispEdges"/>
<rect x="1263" y="305" width="49" height="30" fill="#000" shape-rendering="crispEdges"/>
<rect x="1264" y="306" width="48" height="28" fill="#c0c0c0" shape-rendering="crispEdges"/>
<path d="M1269.9,312.1 C1270.6,309.90000000000003 1272.2,309.5 1273.2,309.5 C1275.6,309.5 1276.9,311.2 1276.9,313.2 C1276.9,315.90000000000003 1273.3,316.6 1273.3,319.1 V320.7" stroke="#c8222f" stroke-width="1.75" fill="none"/><rect x="1272.2" y="322.7" width="2.1" height="2.3" fill="#c8222f"/><path d="M1280.9,312.1 C1281.6,309.90000000000003 1283.2,309.5 1284.2,309.5 C1286.6,309.5 1287.9,311.2 1287.9,313.2 C1287.9,315.90000000000003 1284.3,316.6 1284.3,319.1 V320.7" stroke="#c8222f" stroke-width="1.75" fill="none"/><rect x="1283.2" y="322.7" width="2.1" height="2.3" fill="#c8222f"/><path d="M1291.9,312.1 C1292.6,309.90000000000003 1294.2,309.5 1295.2,309.5 C1297.6,309.5 1298.9,311.2 1298.9,313.2 C1298.9,315.90000000000003 1295.3,316.6 1295.3,319.1 V320.7" stroke="#c8222f" stroke-width="1.75" fill="none"/><rect x="1294.2" y="322.7" width="2.1" height="2.3" fill="#c8222f"/>
<rect x="1377.5" y="303.5" width="15" height="33" stroke="#000" stroke-width="1"  fill="#c0c0c0"/>
<rect x="1429" y="305" width="49" height="30" fill="#000" shape-rendering="crispEdges"/>
<rect x="1429" y="306" width="48" height="28" fill="#c0c0c0" shape-rendering="crispEdges"/>
<path d="M1448.2,315.6 C1448.8999999999999,313.40000000000003 1450.5,313.0 1451.5,313.0 C1453.8999999999999,313.0 1455.2,314.7 1455.2,316.7 C1455.2,319.40000000000003 1451.6,320.1 1451.6,322.6 V324.2" stroke="#c8222f" stroke-width="1.75" fill="none"/><rect x="1450.5" y="326.2" width="2.1" height="2.3" fill="#c8222f"/><path d="M1459.2,315.6 C1459.8999999999999,313.40000000000003 1461.5,313.0 1462.5,313.0 C1464.8999999999999,313.0 1466.2,314.7 1466.2,316.7 C1466.2,319.40000000000003 1462.6,320.1 1462.6,322.6 V324.2" stroke="#c8222f" stroke-width="1.75" fill="none"/><rect x="1461.5" y="326.2" width="2.1" height="2.3" fill="#c8222f"/><path d="M1470.2,315.6 C1470.8999999999999,313.40000000000003 1472.5,313.0 1473.5,313.0 C1475.8999999999999,313.0 1477.2,314.7 1477.2,316.7 C1477.2,319.40000000000003 1473.6,320.1 1473.6,322.6 V324.2" stroke="#c8222f" stroke-width="1.75" fill="none"/><rect x="1472.5" y="326.2" width="2.1" height="2.3" fill="#c8222f"/>
<rect x="1477" y="305" width="1" height="30" fill="#000" shape-rendering="crispEdges"/>
<g shape-rendering="crispEdges">
<rect x="55" y="300" width="1" height="40" fill="#ececec" />
<rect x="102" y="300" width="1" height="40" fill="#ececec" />
<rect x="148" y="300" width="1" height="40" fill="#ececec" />
<rect x="192" y="300" width="1" height="40" fill="#ececec" />
<rect x="330" y="300" width="1" height="40" fill="#ececec" />
<rect x="410" y="300" width="1" height="40" fill="#ececec" />
<rect x="470" y="300" width="1" height="40" fill="#ececec" />
<rect x="580" y="300" width="1" height="40" fill="#ececec" />
<rect x="691" y="300" width="1" height="40" fill="#ececec" />
<rect x="733" y="300" width="1" height="40" fill="#ececec" />
<rect x="780" y="300" width="1" height="40" fill="#ececec" />
<rect x="848" y="300" width="1" height="40" fill="#ececec" />
<rect x="909" y="300" width="1" height="40" fill="#ececec" />
<rect x="996" y="300" width="1" height="40" fill="#ececec" />
<rect x="1080" y="300" width="1" height="40" fill="#ececec" />
<rect x="1154" y="300" width="1" height="40" fill="#ececec" />
<rect x="1228" y="300" width="1" height="40" fill="#ececec" />
<rect x="1312" y="300" width="1" height="40" fill="#ececec" />
<rect x="1405" y="300" width="1" height="40" fill="#ececec" />
<rect x="1489" y="300" width="1" height="40" fill="#ececec" />
<rect x="1563" y="300" width="1" height="40" fill="#ececec" />
<rect x="1626" y="300" width="1" height="40" fill="#ececec" />
<rect x="1755" y="300" width="1" height="40" fill="#ececec" />
<rect x="1783" y="300" width="1" height="40" fill="#ececec" />
<rect x="12" y="339" width="1772" height="1" fill="#ffffff" />
</g>
<g shape-rendering="crispEdges">
<rect x="12" y="340" width="1744" height="39" fill="#9fc8ef" />
</g>
<text x="54.5" y="364" font-size="11.3" fill="#000000" text-anchor="end" transform="matrix(1 0 0 1.1 0 -36.400)" >60</text>
<text x="101.5" y="364" font-size="11.3" fill="#000000" text-anchor="end" transform="matrix(1 0 0 1.1 0 -36.400)" >1</text>
<text x="147.5" y="364" font-size="11.3" fill="#000000" text-anchor="end" transform="matrix(1 0 0 1.1 0 -36.400)" >1</text>
<text x="151.8" y="364" font-size="11.3" fill="#000000" text-anchor="start" transform="matrix(1 0 0 1.1 0 -36.400)" >Stck</text>
<text x="195.8" y="364" font-size="11.3" fill="#000000" text-anchor="start" transform="matrix(1 0 0 1.1 0 -36.400)" >FLA 110x10</text>
<text x="473.8" y="364" font-size="11.3" fill="#000000" text-anchor="start" transform="matrix(1 0 0 1.1 0 -36.400)" >S235JR</text>
<text x="583.8" y="364" font-size="11.3" fill="#000000" text-anchor="start" transform="matrix(1 0 0 1.1 0 -36.400)" >Zeichnung beachten</text>
<text x="732.5" y="364" font-size="11.3" fill="#000000" text-anchor="end" transform="matrix(1 0 0 1.1 0 -36.400)" >10.00</text>
<text x="779.5" y="364" font-size="11.3" fill="#000000" text-anchor="end" transform="matrix(1 0 0 1.1 0 -36.400)" >500.00</text>
<rect x="849" y="340" width="60" height="39" fill="#fff" shape-rendering="crispEdges"/>
<rect x="956" y="340" width="40" height="39" fill="#fff" shape-rendering="crispEdges"/>
<text x="955" y="364" font-size="11.3" fill="#000000" text-anchor="end" transform="matrix(1 0 0 1.1 0 -36.400)" >60</text>
<rect x="1020" y="340" width="60" height="39" fill="#fff" shape-rendering="crispEdges"/>
<text x="1019" y="364" font-size="11.3" fill="#000000" text-anchor="end" transform="matrix(1 0 0 1.1 0 -36.400)" >68</text>
<text x="1153.5" y="364" font-size="11.3" fill="#000000" text-anchor="end" transform="matrix(1 0 0 1.1 0 -36.400)" >31.430</text>
<rect x="1252" y="340" width="60" height="39" fill="#fff" shape-rendering="crispEdges"/>
<text x="1251" y="364" font-size="11.3" fill="#000000" text-anchor="end" transform="matrix(1 0 0 1.1 0 -36.400)" >88</text>
<rect x="1365" y="340" width="40" height="39" fill="#fff" shape-rendering="crispEdges"/>
<text x="1364" y="364" font-size="11.3" fill="#000000" text-anchor="end" transform="matrix(1 0 0 1.1 0 -36.400)" >61</text>
<rect x="1429" y="340" width="60" height="39" fill="#fff" shape-rendering="crispEdges"/>
<text x="1428" y="364" font-size="11.3" fill="#000000" text-anchor="end" transform="matrix(1 0 0 1.1 0 -36.400)" >64</text>
<text x="1562.5" y="364" font-size="11.3" fill="#000000" text-anchor="end" transform="matrix(1 0 0 1.1 0 -36.400)" >0.000</text>
<text x="1625.5" y="364" font-size="11.3" fill="#000000" text-anchor="end" transform="matrix(1 0 0 1.1 0 -36.400)" >3.634000</text>
<text x="1629.8" y="364" font-size="11.3" fill="#000000" text-anchor="start" transform="matrix(1 0 0 1.1 0 -36.400)" >Profil</text>
<rect x="860" y="345" width="49" height="30" fill="#000" shape-rendering="crispEdges"/>
<rect x="861" y="346" width="48" height="28" fill="#c0c0c0" shape-rendering="crispEdges"/>
<path d="M866.9,352.1 C867.6,349.90000000000003 869.2,349.5 870.2,349.5 C872.6,349.5 873.9,351.2 873.9,353.2 C873.9,355.90000000000003 870.3,356.6 870.3,359.1 V360.7" stroke="#c8222f" stroke-width="1.75" fill="none"/><rect x="869.2" y="362.7" width="2.1" height="2.3" fill="#c8222f"/><path d="M877.9,352.1 C878.6,349.90000000000003 880.2,349.5 881.2,349.5 C883.6,349.5 884.9,351.2 884.9,353.2 C884.9,355.90000000000003 881.3,356.6 881.3,359.1 V360.7" stroke="#c8222f" stroke-width="1.75" fill="none"/><rect x="880.2" y="362.7" width="2.1" height="2.3" fill="#c8222f"/><path d="M888.9,352.1 C889.6,349.90000000000003 891.2,349.5 892.2,349.5 C894.6,349.5 895.9,351.2 895.9,353.2 C895.9,355.90000000000003 892.3,356.6 892.3,359.1 V360.7" stroke="#c8222f" stroke-width="1.75" fill="none"/><rect x="891.2" y="362.7" width="2.1" height="2.3" fill="#c8222f"/>
<rect x="968.5" y="343.5" width="15" height="33" stroke="#000" stroke-width="1"  fill="#c0c0c0"/>
<path d="M1020,345.5 H1068.5 L1051.5,374.5 H1020" stroke="#000" stroke-width="1"  fill="#c0c0c0"/>
<rect x="1263" y="345" width="49" height="30" fill="#000" shape-rendering="crispEdges"/>
<rect x="1264" y="346" width="48" height="28" fill="#c0c0c0" shape-rendering="crispEdges"/>
<path d="M1269.9,352.1 C1270.6,349.90000000000003 1272.2,349.5 1273.2,349.5 C1275.6,349.5 1276.9,351.2 1276.9,353.2 C1276.9,355.90000000000003 1273.3,356.6 1273.3,359.1 V360.7" stroke="#c8222f" stroke-width="1.75" fill="none"/><rect x="1272.2" y="362.7" width="2.1" height="2.3" fill="#c8222f"/><path d="M1280.9,352.1 C1281.6,349.90000000000003 1283.2,349.5 1284.2,349.5 C1286.6,349.5 1287.9,351.2 1287.9,353.2 C1287.9,355.90000000000003 1284.3,356.6 1284.3,359.1 V360.7" stroke="#c8222f" stroke-width="1.75" fill="none"/><rect x="1283.2" y="362.7" width="2.1" height="2.3" fill="#c8222f"/><path d="M1291.9,352.1 C1292.6,349.90000000000003 1294.2,349.5 1295.2,349.5 C1297.6,349.5 1298.9,351.2 1298.9,353.2 C1298.9,355.90000000000003 1295.3,356.6 1295.3,359.1 V360.7" stroke="#c8222f" stroke-width="1.75" fill="none"/><rect x="1294.2" y="362.7" width="2.1" height="2.3" fill="#c8222f"/>
<rect x="1368.5" y="352.5" width="33" height="15" stroke="#000" stroke-width="1"  fill="#c0c0c0"/>
<rect x="1429" y="345" width="49" height="30" fill="#000" shape-rendering="crispEdges"/>
<rect x="1429" y="346" width="48" height="28" fill="#c0c0c0" shape-rendering="crispEdges"/>
<g shape-rendering="crispEdges">
<rect x="55" y="340" width="1" height="40" fill="#dff1fb" />
<rect x="102" y="340" width="1" height="40" fill="#dff1fb" />
<rect x="148" y="340" width="1" height="40" fill="#dff1fb" />
<rect x="192" y="340" width="1" height="40" fill="#dff1fb" />
<rect x="330" y="340" width="1" height="40" fill="#dff1fb" />
<rect x="410" y="340" width="1" height="40" fill="#dff1fb" />
<rect x="470" y="340" width="1" height="40" fill="#dff1fb" />
<rect x="580" y="340" width="1" height="40" fill="#dff1fb" />
<rect x="691" y="340" width="1" height="40" fill="#dff1fb" />
<rect x="733" y="340" width="1" height="40" fill="#dff1fb" />
<rect x="780" y="340" width="1" height="40" fill="#dff1fb" />
<rect x="848" y="340" width="1" height="40" fill="#dff1fb" />
<rect x="909" y="340" width="1" height="40" fill="#dff1fb" />
<rect x="996" y="340" width="1" height="40" fill="#dff1fb" />
<rect x="1080" y="340" width="1" height="40" fill="#dff1fb" />
<rect x="1154" y="340" width="1" height="40" fill="#dff1fb" />
<rect x="1228" y="340" width="1" height="40" fill="#dff1fb" />
<rect x="1312" y="340" width="1" height="40" fill="#dff1fb" />
<rect x="1405" y="340" width="1" height="40" fill="#dff1fb" />
<rect x="1489" y="340" width="1" height="40" fill="#dff1fb" />
<rect x="1563" y="340" width="1" height="40" fill="#dff1fb" />
<rect x="1626" y="340" width="1" height="40" fill="#dff1fb" />
<rect x="1755" y="340" width="1" height="40" fill="#dff1fb" />
<rect x="1783" y="340" width="1" height="40" fill="#ececec" />
<rect x="12" y="379" width="1772" height="1" fill="#ffffff" />
</g>
<g shape-rendering="crispEdges">
<rect x="12" y="380" width="1744" height="39" fill="#ffffff" />
</g>
<text x="54.5" y="404" font-size="11.3" fill="#000000" text-anchor="end" transform="matrix(1 0 0 1.1 0 -40.400)" >70</text>
<text x="101.5" y="404" font-size="11.3" fill="#000000" text-anchor="end" transform="matrix(1 0 0 1.1 0 -40.400)" >1</text>
<text x="147.5" y="404" font-size="11.3" fill="#000000" text-anchor="end" transform="matrix(1 0 0 1.1 0 -40.400)" >1</text>
<text x="151.8" y="404" font-size="11.3" fill="#000000" text-anchor="start" transform="matrix(1 0 0 1.1 0 -40.400)" >Stck</text>
<text x="195.8" y="404" font-size="11.3" fill="#000000" text-anchor="start" transform="matrix(1 0 0 1.1 0 -40.400)" >FLA 110x10</text>
<text x="473.8" y="404" font-size="11.3" fill="#000000" text-anchor="start" transform="matrix(1 0 0 1.1 0 -40.400)" >S235JR</text>
<text x="583.8" y="404" font-size="11.3" fill="#000000" text-anchor="start" transform="matrix(1 0 0 1.1 0 -40.400)" >Zeichnung beachten</text>
<text x="732.5" y="404" font-size="11.3" fill="#000000" text-anchor="end" transform="matrix(1 0 0 1.1 0 -40.400)" >10.00</text>
<text x="779.5" y="404" font-size="11.3" fill="#000000" text-anchor="end" transform="matrix(1 0 0 1.1 0 -40.400)" >500.00</text>
<rect x="849" y="380" width="60" height="39" fill="#fff" shape-rendering="crispEdges"/>
<rect x="956" y="380" width="40" height="39" fill="#fff" shape-rendering="crispEdges"/>
<text x="955" y="404" font-size="11.3" fill="#000000" text-anchor="end" transform="matrix(1 0 0 1.1 0 -40.400)" >60</text>
<rect x="1020" y="380" width="60" height="39" fill="#fff" shape-rendering="crispEdges"/>
<text x="1019" y="404" font-size="11.3" fill="#000000" text-anchor="end" transform="matrix(1 0 0 1.1 0 -40.400)" >87</text>
<rect x="1252" y="380" width="60" height="39" fill="#fff" shape-rendering="crispEdges"/>
<text x="1251" y="404" font-size="11.3" fill="#000000" text-anchor="end" transform="matrix(1 0 0 1.1 0 -40.400)" >88</text>
<rect x="1365" y="380" width="40" height="39" fill="#fff" shape-rendering="crispEdges"/>
<text x="1364" y="404" font-size="11.3" fill="#000000" text-anchor="end" transform="matrix(1 0 0 1.1 0 -40.400)" >61</text>
<rect x="1429" y="380" width="60" height="39" fill="#fff" shape-rendering="crispEdges"/>
<text x="1428" y="404" font-size="11.3" fill="#000000" text-anchor="end" transform="matrix(1 0 0 1.1 0 -40.400)" >87</text>
<text x="1625.5" y="404" font-size="11.3" fill="#000000" text-anchor="end" transform="matrix(1 0 0 1.1 0 -40.400)" >4.025000</text>
<text x="1629.8" y="404" font-size="11.3" fill="#000000" text-anchor="start" transform="matrix(1 0 0 1.1 0 -40.400)" >Profil</text>
<rect x="860" y="385" width="49" height="30" fill="#000" shape-rendering="crispEdges"/>
<rect x="861" y="386" width="48" height="28" fill="#c0c0c0" shape-rendering="crispEdges"/>
<path d="M866.9,392.1 C867.6,389.90000000000003 869.2,389.5 870.2,389.5 C872.6,389.5 873.9,391.2 873.9,393.2 C873.9,395.90000000000003 870.3,396.6 870.3,399.1 V400.7" stroke="#c8222f" stroke-width="1.75" fill="none"/><rect x="869.2" y="402.7" width="2.1" height="2.3" fill="#c8222f"/><path d="M877.9,392.1 C878.6,389.90000000000003 880.2,389.5 881.2,389.5 C883.6,389.5 884.9,391.2 884.9,393.2 C884.9,395.90000000000003 881.3,396.6 881.3,399.1 V400.7" stroke="#c8222f" stroke-width="1.75" fill="none"/><rect x="880.2" y="402.7" width="2.1" height="2.3" fill="#c8222f"/><path d="M888.9,392.1 C889.6,389.90000000000003 891.2,389.5 892.2,389.5 C894.6,389.5 895.9,391.2 895.9,393.2 C895.9,395.90000000000003 892.3,396.6 892.3,399.1 V400.7" stroke="#c8222f" stroke-width="1.75" fill="none"/><rect x="891.2" y="402.7" width="2.1" height="2.3" fill="#c8222f"/>
<rect x="968.5" y="383.5" width="15" height="33" stroke="#000" stroke-width="1"  fill="#c0c0c0"/>
<rect x="1020" y="385" width="49" height="30" fill="#000" shape-rendering="crispEdges"/>
<rect x="1020" y="386" width="48" height="28" fill="#c0c0c0" shape-rendering="crispEdges"/>
<path d="M1039.2,395.6 C1039.8999999999999,393.40000000000003 1041.5,393.0 1042.5,393.0 C1044.8999999999999,393.0 1046.2,394.7 1046.2,396.7 C1046.2,399.40000000000003 1042.6,400.1 1042.6,402.6 V404.2" stroke="#c8222f" stroke-width="1.75" fill="none"/><rect x="1041.5" y="406.2" width="2.1" height="2.3" fill="#c8222f"/><path d="M1050.2,395.6 C1050.8999999999999,393.40000000000003 1052.5,393.0 1053.5,393.0 C1055.8999999999999,393.0 1057.2,394.7 1057.2,396.7 C1057.2,399.40000000000003 1053.6,400.1 1053.6,402.6 V404.2" stroke="#c8222f" stroke-width="1.75" fill="none"/><rect x="1052.5" y="406.2" width="2.1" height="2.3" fill="#c8222f"/><path d="M1061.2,395.6 C1061.8999999999999,393.40000000000003 1063.5,393.0 1064.5,393.0 C1066.8999999999999,393.0 1068.2,394.7 1068.2,396.7 C1068.2,399.40000000000003 1064.6,400.1 1064.6,402.6 V404.2" stroke="#c8222f" stroke-width="1.75" fill="none"/><rect x="1063.5" y="406.2" width="2.1" height="2.3" fill="#c8222f"/>
<rect x="1068" y="385" width="1" height="30" fill="#000" shape-rendering="crispEdges"/>
<rect x="1263" y="385" width="49" height="30" fill="#000" shape-rendering="crispEdges"/>
<rect x="1264" y="386" width="48" height="28" fill="#c0c0c0" shape-rendering="crispEdges"/>
<path d="M1269.9,392.1 C1270.6,389.90000000000003 1272.2,389.5 1273.2,389.5 C1275.6,389.5 1276.9,391.2 1276.9,393.2 C1276.9,395.90000000000003 1273.3,396.6 1273.3,399.1 V400.7" stroke="#c8222f" stroke-width="1.75" fill="none"/><rect x="1272.2" y="402.7" width="2.1" height="2.3" fill="#c8222f"/><path d="M1280.9,392.1 C1281.6,389.90000000000003 1283.2,389.5 1284.2,389.5 C1286.6,389.5 1287.9,391.2 1287.9,393.2 C1287.9,395.90000000000003 1284.3,396.6 1284.3,399.1 V400.7" stroke="#c8222f" stroke-width="1.75" fill="none"/><rect x="1283.2" y="402.7" width="2.1" height="2.3" fill="#c8222f"/><path d="M1291.9,392.1 C1292.6,389.90000000000003 1294.2,389.5 1295.2,389.5 C1297.6,389.5 1298.9,391.2 1298.9,393.2 C1298.9,395.90000000000003 1295.3,396.6 1295.3,399.1 V400.7" stroke="#c8222f" stroke-width="1.75" fill="none"/><rect x="1294.2" y="402.7" width="2.1" height="2.3" fill="#c8222f"/>
<rect x="1368.5" y="392.5" width="33" height="15" stroke="#000" stroke-width="1"  fill="#c0c0c0"/>
<rect x="1429" y="385" width="49" height="30" fill="#000" shape-rendering="crispEdges"/>
<rect x="1429" y="386" width="48" height="28" fill="#c0c0c0" shape-rendering="crispEdges"/>
<path d="M1448.2,395.6 C1448.8999999999999,393.40000000000003 1450.5,393.0 1451.5,393.0 C1453.8999999999999,393.0 1455.2,394.7 1455.2,396.7 C1455.2,399.40000000000003 1451.6,400.1 1451.6,402.6 V404.2" stroke="#c8222f" stroke-width="1.75" fill="none"/><rect x="1450.5" y="406.2" width="2.1" height="2.3" fill="#c8222f"/><path d="M1459.2,395.6 C1459.8999999999999,393.40000000000003 1461.5,393.0 1462.5,393.0 C1464.8999999999999,393.0 1466.2,394.7 1466.2,396.7 C1466.2,399.40000000000003 1462.6,400.1 1462.6,402.6 V404.2" stroke="#c8222f" stroke-width="1.75" fill="none"/><rect x="1461.5" y="406.2" width="2.1" height="2.3" fill="#c8222f"/><path d="M1470.2,395.6 C1470.8999999999999,393.40000000000003 1472.5,393.0 1473.5,393.0 C1475.8999999999999,393.0 1477.2,394.7 1477.2,396.7 C1477.2,399.40000000000003 1473.6,400.1 1473.6,402.6 V404.2" stroke="#c8222f" stroke-width="1.75" fill="none"/><rect x="1472.5" y="406.2" width="2.1" height="2.3" fill="#c8222f"/>
<rect x="1477" y="385" width="1" height="30" fill="#000" shape-rendering="crispEdges"/>
<g shape-rendering="crispEdges">
<rect x="55" y="380" width="1" height="40" fill="#ececec" />
<rect x="102" y="380" width="1" height="40" fill="#ececec" />
<rect x="148" y="380" width="1" height="40" fill="#ececec" />
<rect x="192" y="380" width="1" height="40" fill="#ececec" />
<rect x="330" y="380" width="1" height="40" fill="#ececec" />
<rect x="410" y="380" width="1" height="40" fill="#ececec" />
<rect x="470" y="380" width="1" height="40" fill="#ececec" />
<rect x="580" y="380" width="1" height="40" fill="#ececec" />
<rect x="691" y="380" width="1" height="40" fill="#ececec" />
<rect x="733" y="380" width="1" height="40" fill="#ececec" />
<rect x="780" y="380" width="1" height="40" fill="#ececec" />
<rect x="848" y="380" width="1" height="40" fill="#ececec" />
<rect x="909" y="380" width="1" height="40" fill="#ececec" />
<rect x="996" y="380" width="1" height="40" fill="#ececec" />
<rect x="1080" y="380" width="1" height="40" fill="#ececec" />
<rect x="1154" y="380" width="1" height="40" fill="#ececec" />
<rect x="1228" y="380" width="1" height="40" fill="#ececec" />
<rect x="1312" y="380" width="1" height="40" fill="#ececec" />
<rect x="1405" y="380" width="1" height="40" fill="#ececec" />
<rect x="1489" y="380" width="1" height="40" fill="#ececec" />
<rect x="1563" y="380" width="1" height="40" fill="#ececec" />
<rect x="1626" y="380" width="1" height="40" fill="#ececec" />
<rect x="1755" y="380" width="1" height="40" fill="#ececec" />
<rect x="1783" y="380" width="1" height="40" fill="#ececec" />
<rect x="12" y="419" width="1772" height="1" fill="#ffffff" />
</g>
<g shape-rendering="crispEdges">
<rect x="12" y="420" width="1744" height="39" fill="#9fc8ef" />
</g>
<text x="54.5" y="444" font-size="11.3" fill="#000000" text-anchor="end" transform="matrix(1 0 0 1.1 0 -44.400)" >80</text>
<text x="101.5" y="444" font-size="11.3" fill="#000000" text-anchor="end" transform="matrix(1 0 0 1.1 0 -44.400)" >1</text>
<text x="147.5" y="444" font-size="11.3" fill="#000000" text-anchor="end" transform="matrix(1 0 0 1.1 0 -44.400)" >1</text>
<text x="151.8" y="444" font-size="11.3" fill="#000000" text-anchor="start" transform="matrix(1 0 0 1.1 0 -44.400)" >Stck</text>
<text x="195.8" y="444" font-size="11.3" fill="#000000" text-anchor="start" transform="matrix(1 0 0 1.1 0 -44.400)" >UNP 220</text>
<text x="473.8" y="444" font-size="11.3" fill="#000000" text-anchor="start" transform="matrix(1 0 0 1.1 0 -44.400)" >S235JR</text>
<text x="583.8" y="444" font-size="11.3" fill="#000000" text-anchor="start" transform="matrix(1 0 0 1.1 0 -44.400)" >Zeichnung beachten</text>
<text x="732.5" y="444" font-size="11.3" fill="#000000" text-anchor="end" transform="matrix(1 0 0 1.1 0 -44.400)" >220.00</text>
<text x="779.5" y="444" font-size="11.3" fill="#000000" text-anchor="end" transform="matrix(1 0 0 1.1 0 -44.400)" >500.00</text>
<rect x="849" y="420" width="60" height="39" fill="#fff" shape-rendering="crispEdges"/>
<rect x="956" y="420" width="40" height="39" fill="#fff" shape-rendering="crispEdges"/>
<text x="955" y="444" font-size="11.3" fill="#000000" text-anchor="end" transform="matrix(1 0 0 1.1 0 -44.400)" >27</text>
<rect x="1030" y="420" width="50" height="39" fill="#fff" shape-rendering="crispEdges"/>
<text x="1029" y="444" font-size="11.3" fill="#000000" text-anchor="end" transform="matrix(1 0 0 1.1 0 -44.400)" >31</text>
<text x="1153.5" y="444" font-size="11.3" fill="#000000" text-anchor="end" transform="matrix(1 0 0 1.1 0 -44.400)" >0.000</text>
<rect x="1252" y="420" width="60" height="39" fill="#fff" shape-rendering="crispEdges"/>
<text x="1251" y="444" font-size="11.3" fill="#000000" text-anchor="end" transform="matrix(1 0 0 1.1 0 -44.400)" >88</text>
<rect x="1365" y="420" width="40" height="39" fill="#fff" shape-rendering="crispEdges"/>
<text x="1364" y="444" font-size="11.3" fill="#000000" text-anchor="end" transform="matrix(1 0 0 1.1 0 -44.400)" >25</text>
<rect x="1429" y="420" width="60" height="39" fill="#fff" shape-rendering="crispEdges"/>
<text x="1428" y="444" font-size="11.3" fill="#000000" text-anchor="end" transform="matrix(1 0 0 1.1 0 -44.400)" >14</text>
<text x="1562.5" y="444" font-size="11.3" fill="#000000" text-anchor="end" transform="matrix(1 0 0 1.1 0 -44.400)" >0.000</text>
<text x="1625.5" y="444" font-size="11.3" fill="#000000" text-anchor="end" transform="matrix(1 0 0 1.1 0 -44.400)" >13.369000</text>
<text x="1629.8" y="444" font-size="11.3" fill="#000000" text-anchor="start" transform="matrix(1 0 0 1.1 0 -44.400)" >Profil</text>
<rect x="860" y="425" width="49" height="30" fill="#000" shape-rendering="crispEdges"/>
<rect x="861" y="426" width="48" height="28" fill="#c0c0c0" shape-rendering="crispEdges"/>
<path d="M866.9,432.1 C867.6,429.90000000000003 869.2,429.5 870.2,429.5 C872.6,429.5 873.9,431.2 873.9,433.2 C873.9,435.90000000000003 870.3,436.6 870.3,439.1 V440.7" stroke="#c8222f" stroke-width="1.75" fill="none"/><rect x="869.2" y="442.7" width="2.1" height="2.3" fill="#c8222f"/><path d="M877.9,432.1 C878.6,429.90000000000003 880.2,429.5 881.2,429.5 C883.6,429.5 884.9,431.2 884.9,433.2 C884.9,435.90000000000003 881.3,436.6 881.3,439.1 V440.7" stroke="#c8222f" stroke-width="1.75" fill="none"/><rect x="880.2" y="442.7" width="2.1" height="2.3" fill="#c8222f"/><path d="M888.9,432.1 C889.6,429.90000000000003 891.2,429.5 892.2,429.5 C894.6,429.5 895.9,431.2 895.9,433.2 C895.9,435.90000000000003 892.3,436.6 892.3,439.1 V440.7" stroke="#c8222f" stroke-width="1.75" fill="none"/><rect x="891.2" y="442.7" width="2.1" height="2.3" fill="#c8222f"/>
<path d="M958.5,429.5 H990.5 V445.5 H988.5 L986.5,432.5 H962.5 L960.5,445.5 H958.5 Z" stroke="#000" stroke-width="1"  fill="#c0c0c0"/>
<rect x="1030" y="431" width="37" height="19" fill="#000" shape-rendering="crispEdges"/>
<rect x="1030" y="432" width="36" height="17" fill="#c0c0c0" shape-rendering="crispEdges"/>
<path d="M1030,433.5 H1066" stroke="#000" stroke-width="1"  stroke-dasharray="4 4" stroke-dashoffset="-2" shape-rendering="crispEdges"/>
<rect x="1263" y="425" width="49" height="30" fill="#000" shape-rendering="crispEdges"/>
<rect x="1264" y="426" width="48" height="28" fill="#c0c0c0" shape-rendering="crispEdges"/>
<path d="M1269.9,432.1 C1270.6,429.90000000000003 1272.2,429.5 1273.2,429.5 C1275.6,429.5 1276.9,431.2 1276.9,433.2 C1276.9,435.90000000000003 1273.3,436.6 1273.3,439.1 V440.7" stroke="#c8222f" stroke-width="1.75" fill="none"/><rect x="1272.2" y="442.7" width="2.1" height="2.3" fill="#c8222f"/><path d="M1280.9,432.1 C1281.6,429.90000000000003 1283.2,429.5 1284.2,429.5 C1286.6,429.5 1287.9,431.2 1287.9,433.2 C1287.9,435.90000000000003 1284.3,436.6 1284.3,439.1 V440.7" stroke="#c8222f" stroke-width="1.75" fill="none"/><rect x="1283.2" y="442.7" width="2.1" height="2.3" fill="#c8222f"/><path d="M1291.9,432.1 C1292.6,429.90000000000003 1294.2,429.5 1295.2,429.5 C1297.6,429.5 1298.9,431.2 1298.9,433.2 C1298.9,435.90000000000003 1295.3,436.6 1295.3,439.1 V440.7" stroke="#c8222f" stroke-width="1.75" fill="none"/><rect x="1294.2" y="442.7" width="2.1" height="2.3" fill="#c8222f"/>
<path d="M1376.5,423.5 H1392.5 V425.5 H1382.5 L1379.5,427.5 V451.5 L1382.5,453.5 H1392.5 V455.5 H1376.5 Z" stroke="#000" stroke-width="1"  fill="#c0c0c0"/>
<rect x="1429" y="425" width="49" height="30" fill="#000" shape-rendering="crispEdges"/>
<rect x="1429" y="426" width="48" height="28" fill="#c0c0c0" shape-rendering="crispEdges"/>
<rect x="1429" y="429" width="48" height="1" fill="#000" shape-rendering="crispEdges"/>
<rect x="1429" y="450" width="48" height="1" fill="#000" shape-rendering="crispEdges"/>
<g shape-rendering="crispEdges">
<rect x="55" y="420" width="1" height="40" fill="#dff1fb" />
<rect x="102" y="420" width="1" height="40" fill="#dff1fb" />
<rect x="148" y="420" width="1" height="40" fill="#dff1fb" />
<rect x="192" y="420" width="1" height="40" fill="#dff1fb" />
<rect x="330" y="420" width="1" height="40" fill="#dff1fb" />
<rect x="410" y="420" width="1" height="40" fill="#dff1fb" />
<rect x="470" y="420" width="1" height="40" fill="#dff1fb" />
<rect x="580" y="420" width="1" height="40" fill="#dff1fb" />
<rect x="691" y="420" width="1" height="40" fill="#dff1fb" />
<rect x="733" y="420" width="1" height="40" fill="#dff1fb" />
<rect x="780" y="420" width="1" height="40" fill="#dff1fb" />
<rect x="848" y="420" width="1" height="40" fill="#dff1fb" />
<rect x="909" y="420" width="1" height="40" fill="#dff1fb" />
<rect x="996" y="420" width="1" height="40" fill="#dff1fb" />
<rect x="1080" y="420" width="1" height="40" fill="#dff1fb" />
<rect x="1154" y="420" width="1" height="40" fill="#dff1fb" />
<rect x="1228" y="420" width="1" height="40" fill="#dff1fb" />
<rect x="1312" y="420" width="1" height="40" fill="#dff1fb" />
<rect x="1405" y="420" width="1" height="40" fill="#dff1fb" />
<rect x="1489" y="420" width="1" height="40" fill="#dff1fb" />
<rect x="1563" y="420" width="1" height="40" fill="#dff1fb" />
<rect x="1626" y="420" width="1" height="40" fill="#dff1fb" />
<rect x="1755" y="420" width="1" height="40" fill="#dff1fb" />
<rect x="1783" y="420" width="1" height="40" fill="#ececec" />
<rect x="12" y="459" width="1772" height="1" fill="#ffffff" />
</g>
<g shape-rendering="crispEdges">
<rect x="12" y="460" width="1744" height="39" fill="#ffffff" />
</g>
<text x="54.5" y="484" font-size="11.3" fill="#000000" text-anchor="end" transform="matrix(1 0 0 1.1 0 -48.400)" >90</text>
<text x="101.5" y="484" font-size="11.3" fill="#000000" text-anchor="end" transform="matrix(1 0 0 1.1 0 -48.400)" >1</text>
<text x="147.5" y="484" font-size="11.3" fill="#000000" text-anchor="end" transform="matrix(1 0 0 1.1 0 -48.400)" >1</text>
<text x="151.8" y="484" font-size="11.3" fill="#000000" text-anchor="start" transform="matrix(1 0 0 1.1 0 -48.400)" >Stck</text>
<text x="195.8" y="484" font-size="11.3" fill="#000000" text-anchor="start" transform="matrix(1 0 0 1.1 0 -48.400)" >RRO 50x30x4</text>
<text x="413.8" y="484" font-size="11.3" fill="#000000" text-anchor="start" transform="matrix(1 0 0 1.1 0 -48.400)" >EN 10219</text>
<text x="473.8" y="484" font-size="11.3" fill="#000000" text-anchor="start" transform="matrix(1 0 0 1.1 0 -48.400)" >S235JR</text>
<text x="583.8" y="484" font-size="11.3" fill="#000000" text-anchor="start" transform="matrix(1 0 0 1.1 0 -48.400)" >Zeichnung beachten</text>
<text x="732.5" y="484" font-size="11.3" fill="#000000" text-anchor="end" transform="matrix(1 0 0 1.1 0 -48.400)" >50.00</text>
<text x="779.5" y="484" font-size="11.3" fill="#000000" text-anchor="end" transform="matrix(1 0 0 1.1 0 -48.400)" >490.00</text>
<rect x="849" y="460" width="60" height="39" fill="#fff" shape-rendering="crispEdges"/>
<rect x="956" y="460" width="40" height="39" fill="#fff" shape-rendering="crispEdges"/>
<text x="955" y="484" font-size="11.3" fill="#000000" text-anchor="end" transform="matrix(1 0 0 1.1 0 -48.400)" >3</text>
<rect x="1020" y="460" width="60" height="39" fill="#fff" shape-rendering="crispEdges"/>
<text x="1019" y="484" font-size="11.3" fill="#000000" text-anchor="end" transform="matrix(1 0 0 1.1 0 -48.400)" >6</text>
<text x="1153.5" y="484" font-size="11.3" fill="#000000" text-anchor="end" transform="matrix(1 0 0 1.1 0 -48.400)" >0.000</text>
<rect x="1252" y="460" width="60" height="39" fill="#fff" shape-rendering="crispEdges"/>
<text x="1251" y="484" font-size="11.3" fill="#000000" text-anchor="end" transform="matrix(1 0 0 1.1 0 -48.400)" >88</text>
<rect x="1365" y="460" width="40" height="39" fill="#fff" shape-rendering="crispEdges"/>
<text x="1364" y="484" font-size="11.3" fill="#000000" text-anchor="end" transform="matrix(1 0 0 1.1 0 -48.400)" >2</text>
<rect x="1429" y="460" width="60" height="39" fill="#fff" shape-rendering="crispEdges"/>
<text x="1428" y="484" font-size="11.3" fill="#000000" text-anchor="end" transform="matrix(1 0 0 1.1 0 -48.400)" >6</text>
<text x="1562.5" y="484" font-size="11.3" fill="#000000" text-anchor="end" transform="matrix(1 0 0 1.1 0 -48.400)" >0.000</text>
<text x="1625.5" y="484" font-size="11.3" fill="#000000" text-anchor="end" transform="matrix(1 0 0 1.1 0 -48.400)" >2.043000</text>
<text x="1629.8" y="484" font-size="11.3" fill="#000000" text-anchor="start" transform="matrix(1 0 0 1.1 0 -48.400)" >Profil</text>
<rect x="860" y="465" width="49" height="30" fill="#000" shape-rendering="crispEdges"/>
<rect x="861" y="466" width="48" height="28" fill="#c0c0c0" shape-rendering="crispEdges"/>
<path d="M866.9,472.1 C867.6,469.90000000000003 869.2,469.5 870.2,469.5 C872.6,469.5 873.9,471.2 873.9,473.2 C873.9,475.90000000000003 870.3,476.6 870.3,479.1 V480.7" stroke="#c8222f" stroke-width="1.75" fill="none"/><rect x="869.2" y="482.7" width="2.1" height="2.3" fill="#c8222f"/><path d="M877.9,472.1 C878.6,469.90000000000003 880.2,469.5 881.2,469.5 C883.6,469.5 884.9,471.2 884.9,473.2 C884.9,475.90000000000003 881.3,476.6 881.3,479.1 V480.7" stroke="#c8222f" stroke-width="1.75" fill="none"/><rect x="880.2" y="482.7" width="2.1" height="2.3" fill="#c8222f"/><path d="M888.9,472.1 C889.6,469.90000000000003 891.2,469.5 892.2,469.5 C894.6,469.5 895.9,471.2 895.9,473.2 C895.9,475.90000000000003 892.3,476.6 892.3,479.1 V480.7" stroke="#c8222f" stroke-width="1.75" fill="none"/><rect x="891.2" y="482.7" width="2.1" height="2.3" fill="#c8222f"/>
<rect x="959.5" y="470.5" width="32" height="16" rx="2" stroke="#000" stroke-width="1"  fill="#c0c0c0"/>
<rect x="962.5" y="473.5" width="26" height="10" stroke="#000" stroke-width="1"  fill="#fff"/>
<rect x="1020" y="465" width="49" height="30" fill="#000" shape-rendering="crispEdges"/>
<rect x="1020" y="466" width="48" height="28" fill="#c0c0c0" shape-rendering="crispEdges"/>
<path d="M1020,469.5 H1068" stroke="#000" stroke-width="1"  stroke-dasharray="4 4" stroke-dashoffset="-1" shape-rendering="crispEdges"/>
<path d="M1020,490.5 H1068" stroke="#000" stroke-width="1"  stroke-dasharray="4 4" stroke-dashoffset="-1" shape-rendering="crispEdges"/>
<rect x="1263" y="465" width="49" height="30" fill="#000" shape-rendering="crispEdges"/>
<rect x="1264" y="466" width="48" height="28" fill="#c0c0c0" shape-rendering="crispEdges"/>
<path d="M1269.9,472.1 C1270.6,469.90000000000003 1272.2,469.5 1273.2,469.5 C1275.6,469.5 1276.9,471.2 1276.9,473.2 C1276.9,475.90000000000003 1273.3,476.6 1273.3,479.1 V480.7" stroke="#c8222f" stroke-width="1.75" fill="none"/><rect x="1272.2" y="482.7" width="2.1" height="2.3" fill="#c8222f"/><path d="M1280.9,472.1 C1281.6,469.90000000000003 1283.2,469.5 1284.2,469.5 C1286.6,469.5 1287.9,471.2 1287.9,473.2 C1287.9,475.90000000000003 1284.3,476.6 1284.3,479.1 V480.7" stroke="#c8222f" stroke-width="1.75" fill="none"/><rect x="1283.2" y="482.7" width="2.1" height="2.3" fill="#c8222f"/><path d="M1291.9,472.1 C1292.6,469.90000000000003 1294.2,469.5 1295.2,469.5 C1297.6,469.5 1298.9,471.2 1298.9,473.2 C1298.9,475.90000000000003 1295.3,476.6 1295.3,479.1 V480.7" stroke="#c8222f" stroke-width="1.75" fill="none"/><rect x="1294.2" y="482.7" width="2.1" height="2.3" fill="#c8222f"/>
<rect x="1378.5" y="463.5" width="16" height="32" rx="2" stroke="#000" stroke-width="1"  fill="#c0c0c0"/>
<rect x="1381.5" y="466.5" width="10" height="26" stroke="#000" stroke-width="1"  fill="#fff"/>
<rect x="1429" y="465" width="49" height="30" fill="#000" shape-rendering="crispEdges"/>
<rect x="1429" y="466" width="48" height="28" fill="#c0c0c0" shape-rendering="crispEdges"/>
<path d="M1429,469.5 H1477" stroke="#000" stroke-width="1"  stroke-dasharray="4 4" stroke-dashoffset="-1" shape-rendering="crispEdges"/>
<path d="M1429,490.5 H1477" stroke="#000" stroke-width="1"  stroke-dasharray="4 4" stroke-dashoffset="-1" shape-rendering="crispEdges"/>
<g shape-rendering="crispEdges">
<rect x="55" y="460" width="1" height="40" fill="#ececec" />
<rect x="102" y="460" width="1" height="40" fill="#ececec" />
<rect x="148" y="460" width="1" height="40" fill="#ececec" />
<rect x="192" y="460" width="1" height="40" fill="#ececec" />
<rect x="330" y="460" width="1" height="40" fill="#ececec" />
<rect x="410" y="460" width="1" height="40" fill="#ececec" />
<rect x="470" y="460" width="1" height="40" fill="#ececec" />
<rect x="580" y="460" width="1" height="40" fill="#ececec" />
<rect x="691" y="460" width="1" height="40" fill="#ececec" />
<rect x="733" y="460" width="1" height="40" fill="#ececec" />
<rect x="780" y="460" width="1" height="40" fill="#ececec" />
<rect x="848" y="460" width="1" height="40" fill="#ececec" />
<rect x="909" y="460" width="1" height="40" fill="#ececec" />
<rect x="996" y="460" width="1" height="40" fill="#ececec" />
<rect x="1080" y="460" width="1" height="40" fill="#ececec" />
<rect x="1154" y="460" width="1" height="40" fill="#ececec" />
<rect x="1228" y="460" width="1" height="40" fill="#ececec" />
<rect x="1312" y="460" width="1" height="40" fill="#ececec" />
<rect x="1405" y="460" width="1" height="40" fill="#ececec" />
<rect x="1489" y="460" width="1" height="40" fill="#ececec" />
<rect x="1563" y="460" width="1" height="40" fill="#ececec" />
<rect x="1626" y="460" width="1" height="40" fill="#ececec" />
<rect x="1755" y="460" width="1" height="40" fill="#ececec" />
<rect x="1783" y="460" width="1" height="40" fill="#ececec" />
<rect x="12" y="499" width="1772" height="1" fill="#ffffff" />
</g>
<g shape-rendering="crispEdges">
<rect x="12" y="500" width="1744" height="39" fill="#0078d7" />
<rect x="1756" y="500" width="27" height="39" fill="#0078d7" />
</g>
<text x="54.5" y="524" font-size="11.3" fill="#ffffff" text-anchor="end" transform="matrix(1 0 0 1.1 0 -52.400)" >100</text>
<text x="101.5" y="524" font-size="11.3" fill="#ffffff" text-anchor="end" transform="matrix(1 0 0 1.1 0 -52.400)" >1</text>
<rect x="103" y="500" width="45" height="39" fill="#9fc8ef" />
<rect x="139" y="500" width="6" height="13" fill="#0078d7" />
<text x="144.5" y="511" font-size="11" fill="#fff" text-anchor="end" >1</text>
<rect x="145" y="500" width="1" height="13" fill="#2b2b2b" />
<text x="151.8" y="524" font-size="11.3" fill="#ffffff" text-anchor="start" transform="matrix(1 0 0 1.1 0 -52.400)" >Stck</text>
<text x="195.8" y="524" font-size="11.3" fill="#ffffff" text-anchor="start" transform="matrix(1 0 0 1.1 0 -52.400)" >RRO 50x30x4</text>
<text x="413.8" y="524" font-size="11.3" fill="#ffffff" text-anchor="start" transform="matrix(1 0 0 1.1 0 -52.400)" >EN 10219</text>
<text x="473.8" y="524" font-size="11.3" fill="#ffffff" text-anchor="start" transform="matrix(1 0 0 1.1 0 -52.400)" >S235JR</text>
<text x="583.8" y="524" font-size="11.3" fill="#ffffff" text-anchor="start" transform="matrix(1 0 0 1.1 0 -52.400)" >Zeichnung beachten</text>
<text x="732.5" y="524" font-size="11.3" fill="#ffffff" text-anchor="end" transform="matrix(1 0 0 1.1 0 -52.400)" >30.00</text>
<text x="779.5" y="524" font-size="11.3" fill="#ffffff" text-anchor="end" transform="matrix(1 0 0 1.1 0 -52.400)" >490.00</text>
<rect x="849" y="500" width="60" height="39" fill="#fff" shape-rendering="crispEdges"/>
<rect x="956" y="500" width="40" height="39" fill="#fff" shape-rendering="crispEdges"/>
<text x="955" y="524" font-size="11.3" fill="#ffffff" text-anchor="end" transform="matrix(1 0 0 1.1 0 -52.400)" >2</text>
<rect x="1020" y="500" width="60" height="39" fill="#fff" shape-rendering="crispEdges"/>
<text x="1019" y="524" font-size="11.3" fill="#ffffff" text-anchor="end" transform="matrix(1 0 0 1.1 0 -52.400)" >6</text>
<text x="1153.5" y="524" font-size="11.3" fill="#ffffff" text-anchor="end" transform="matrix(1 0 0 1.1 0 -52.400)" >0.000</text>
<rect x="1252" y="500" width="60" height="39" fill="#fff" shape-rendering="crispEdges"/>
<text x="1251" y="524" font-size="11.3" fill="#ffffff" text-anchor="end" transform="matrix(1 0 0 1.1 0 -52.400)" >88</text>
<rect x="1365" y="500" width="40" height="39" fill="#fff" shape-rendering="crispEdges"/>
<text x="1364" y="524" font-size="11.3" fill="#ffffff" text-anchor="end" transform="matrix(1 0 0 1.1 0 -52.400)" >3</text>
<rect x="1429" y="500" width="60" height="39" fill="#fff" shape-rendering="crispEdges"/>
<text x="1428" y="524" font-size="11.3" fill="#ffffff" text-anchor="end" transform="matrix(1 0 0 1.1 0 -52.400)" >6</text>
<text x="1562.5" y="524" font-size="11.3" fill="#ffffff" text-anchor="end" transform="matrix(1 0 0 1.1 0 -52.400)" >0.000</text>
<text x="1625.5" y="524" font-size="11.3" fill="#ffffff" text-anchor="end" transform="matrix(1 0 0 1.1 0 -52.400)" >2.042000</text>
<text x="1629.8" y="524" font-size="11.3" fill="#ffffff" text-anchor="start" transform="matrix(1 0 0 1.1 0 -52.400)" >Profil</text>
<rect x="860" y="505" width="49" height="30" fill="#000" shape-rendering="crispEdges"/>
<rect x="861" y="506" width="48" height="28" fill="#c0c0c0" shape-rendering="crispEdges"/>
<path d="M866.9,512.1 C867.6,509.90000000000003 869.2,509.5 870.2,509.5 C872.6,509.5 873.9,511.2 873.9,513.2 C873.9,515.9 870.3,516.6 870.3,519.1 V520.7" stroke="#c8222f" stroke-width="1.75" fill="none"/><rect x="869.2" y="522.7" width="2.1" height="2.3" fill="#c8222f"/><path d="M877.9,512.1 C878.6,509.90000000000003 880.2,509.5 881.2,509.5 C883.6,509.5 884.9,511.2 884.9,513.2 C884.9,515.9 881.3,516.6 881.3,519.1 V520.7" stroke="#c8222f" stroke-width="1.75" fill="none"/><rect x="880.2" y="522.7" width="2.1" height="2.3" fill="#c8222f"/><path d="M888.9,512.1 C889.6,509.90000000000003 891.2,509.5 892.2,509.5 C894.6,509.5 895.9,511.2 895.9,513.2 C895.9,515.9 892.3,516.6 892.3,519.1 V520.7" stroke="#c8222f" stroke-width="1.75" fill="none"/><rect x="891.2" y="522.7" width="2.1" height="2.3" fill="#c8222f"/>
<rect x="969.5" y="503.5" width="16" height="32" rx="2" stroke="#000" stroke-width="1"  fill="#c0c0c0"/>
<rect x="972.5" y="506.5" width="10" height="26" stroke="#000" stroke-width="1"  fill="#fff"/>
<rect x="1020" y="505" width="49" height="30" fill="#000" shape-rendering="crispEdges"/>
<rect x="1020" y="506" width="48" height="28" fill="#c0c0c0" shape-rendering="crispEdges"/>
<path d="M1020,509.5 H1068" stroke="#000" stroke-width="1"  stroke-dasharray="4 4" stroke-dashoffset="-1" shape-rendering="crispEdges"/>
<path d="M1020,530.5 H1068" stroke="#000" stroke-width="1"  stroke-dasharray="4 4" stroke-dashoffset="-1" shape-rendering="crispEdges"/>
<rect x="1263" y="505" width="49" height="30" fill="#000" shape-rendering="crispEdges"/>
<rect x="1264" y="506" width="48" height="28" fill="#c0c0c0" shape-rendering="crispEdges"/>
<path d="M1269.9,512.1 C1270.6,509.90000000000003 1272.2,509.5 1273.2,509.5 C1275.6,509.5 1276.9,511.2 1276.9,513.2 C1276.9,515.9 1273.3,516.6 1273.3,519.1 V520.7" stroke="#c8222f" stroke-width="1.75" fill="none"/><rect x="1272.2" y="522.7" width="2.1" height="2.3" fill="#c8222f"/><path d="M1280.9,512.1 C1281.6,509.90000000000003 1283.2,509.5 1284.2,509.5 C1286.6,509.5 1287.9,511.2 1287.9,513.2 C1287.9,515.9 1284.3,516.6 1284.3,519.1 V520.7" stroke="#c8222f" stroke-width="1.75" fill="none"/><rect x="1283.2" y="522.7" width="2.1" height="2.3" fill="#c8222f"/><path d="M1291.9,512.1 C1292.6,509.90000000000003 1294.2,509.5 1295.2,509.5 C1297.6,509.5 1298.9,511.2 1298.9,513.2 C1298.9,515.9 1295.3,516.6 1295.3,519.1 V520.7" stroke="#c8222f" stroke-width="1.75" fill="none"/><rect x="1294.2" y="522.7" width="2.1" height="2.3" fill="#c8222f"/>
<rect x="1368.5" y="510.5" width="32" height="16" rx="2" stroke="#000" stroke-width="1"  fill="#c0c0c0"/>
<rect x="1371.5" y="513.5" width="26" height="10" stroke="#000" stroke-width="1"  fill="#fff"/>
<rect x="1429" y="505" width="49" height="30" fill="#000" shape-rendering="crispEdges"/>
<rect x="1429" y="506" width="48" height="28" fill="#c0c0c0" shape-rendering="crispEdges"/>
<path d="M1429,509.5 H1477" stroke="#000" stroke-width="1"  stroke-dasharray="4 4" stroke-dashoffset="-1" shape-rendering="crispEdges"/>
<path d="M1429,530.5 H1477" stroke="#000" stroke-width="1"  stroke-dasharray="4 4" stroke-dashoffset="-1" shape-rendering="crispEdges"/>
<g shape-rendering="crispEdges">
<rect x="55" y="500" width="1" height="40" fill="#dff1fb" />
<rect x="102" y="500" width="1" height="40" fill="#dff1fb" />
<rect x="148" y="500" width="1" height="40" fill="#dff1fb" />
<rect x="192" y="500" width="1" height="40" fill="#dff1fb" />
<rect x="330" y="500" width="1" height="40" fill="#dff1fb" />
<rect x="410" y="500" width="1" height="40" fill="#dff1fb" />
<rect x="470" y="500" width="1" height="40" fill="#dff1fb" />
<rect x="580" y="500" width="1" height="40" fill="#dff1fb" />
<rect x="691" y="500" width="1" height="40" fill="#dff1fb" />
<rect x="733" y="500" width="1" height="40" fill="#dff1fb" />
<rect x="780" y="500" width="1" height="40" fill="#dff1fb" />
<rect x="848" y="500" width="1" height="40" fill="#dff1fb" />
<rect x="909" y="500" width="1" height="40" fill="#dff1fb" />
<rect x="996" y="500" width="1" height="40" fill="#dff1fb" />
<rect x="1080" y="500" width="1" height="40" fill="#dff1fb" />
<rect x="1154" y="500" width="1" height="40" fill="#dff1fb" />
<rect x="1228" y="500" width="1" height="40" fill="#dff1fb" />
<rect x="1312" y="500" width="1" height="40" fill="#dff1fb" />
<rect x="1405" y="500" width="1" height="40" fill="#dff1fb" />
<rect x="1489" y="500" width="1" height="40" fill="#dff1fb" />
<rect x="1563" y="500" width="1" height="40" fill="#dff1fb" />
<rect x="1626" y="500" width="1" height="40" fill="#dff1fb" />
<rect x="1755" y="500" width="1" height="40" fill="#dff1fb" />
<rect x="1783" y="500" width="1" height="40" fill="#dff1fb" />
<rect x="12" y="539" width="1772" height="1" fill="#c8f0fd" />
</g>
<g shape-rendering="crispEdges">
<rect x="12" y="540" width="1772" height="1" fill="#56606a" />
<rect x="12" y="541" width="1772" height="17" fill="#ababab" />
<rect x="10" y="558" width="1775" height="1" fill="#ffffff" />
<rect x="1784" y="98" width="1" height="461" fill="#ffffff" />
</g>
<g shape-rendering="crispEdges">
<rect x="12" y="571" width="73" height="23" fill="#adadad" />
<rect x="13" y="572" width="71" height="21" fill="#e1e1e1" />
</g>
<text x="38.6" y="587" font-size="11" fill="#000" text-anchor="start" textLength="20.5">Hilfe</text>
<rect x="38" y="588" width="8" height="1" fill="#000" />
<g shape-rendering="crispEdges">
<rect x="96" y="577" width="13" height="13" fill="#bcbcbc" />
<rect x="97" y="578" width="11" height="11" fill="#f0f0f0" />
</g>
<path d="M98.5,583.5 L101,586 L106.5,580.5" stroke="#bcbcbc" stroke-width="1.3" fill="none"/>
<text x="112.4" y="587" font-size="11" fill="#6d6d6d" text-anchor="start" textLength="93">Menge automatisch</text>
<text x="286.5" y="587" font-size="11" fill="#000" text-anchor="start" textLength="21.5">Start</text>
<g shape-rendering="crispEdges">
<rect x="321" y="570" width="35" height="25" fill="#7a7a7a" />
<rect x="322" y="571" width="33" height="23" fill="#fff" />
<rect x="436" y="570" width="35" height="25" fill="#7a7a7a" />
<rect x="437" y="571" width="33" height="23" fill="#fff" />
</g>
<text x="324.4" y="584" font-size="11" fill="#000" text-anchor="start" >10</text>
<text x="366.4" y="587" font-size="11" fill="#000" text-anchor="start" textLength="55">Schrittweite</text>
<text x="439.4" y="584" font-size="11" fill="#000" text-anchor="start" >10</text>
<g shape-rendering="crispEdges">
<rect x="1627" y="571" width="73" height="23" fill="#0078d7" />
<rect x="1629" y="573" width="69" height="19" fill="#e1e1e1" />
</g>
<text x="1656.5" y="587" font-size="11" fill="#000" text-anchor="start" >OK</text>
<rect x="1656" y="588" width="8" height="1" fill="#000" />
<g shape-rendering="crispEdges">
<rect x="1712" y="571" width="73" height="23" fill="#adadad" />
<rect x="1713" y="572" width="71" height="21" fill="#e1e1e1" />
</g>
<text x="1721.5" y="587" font-size="11" fill="#000" text-anchor="start" textLength="52.5">Abbrechen</text>
<rect x="1721" y="588" width="7" height="1" fill="#000" />
</svg>
</body></html>
